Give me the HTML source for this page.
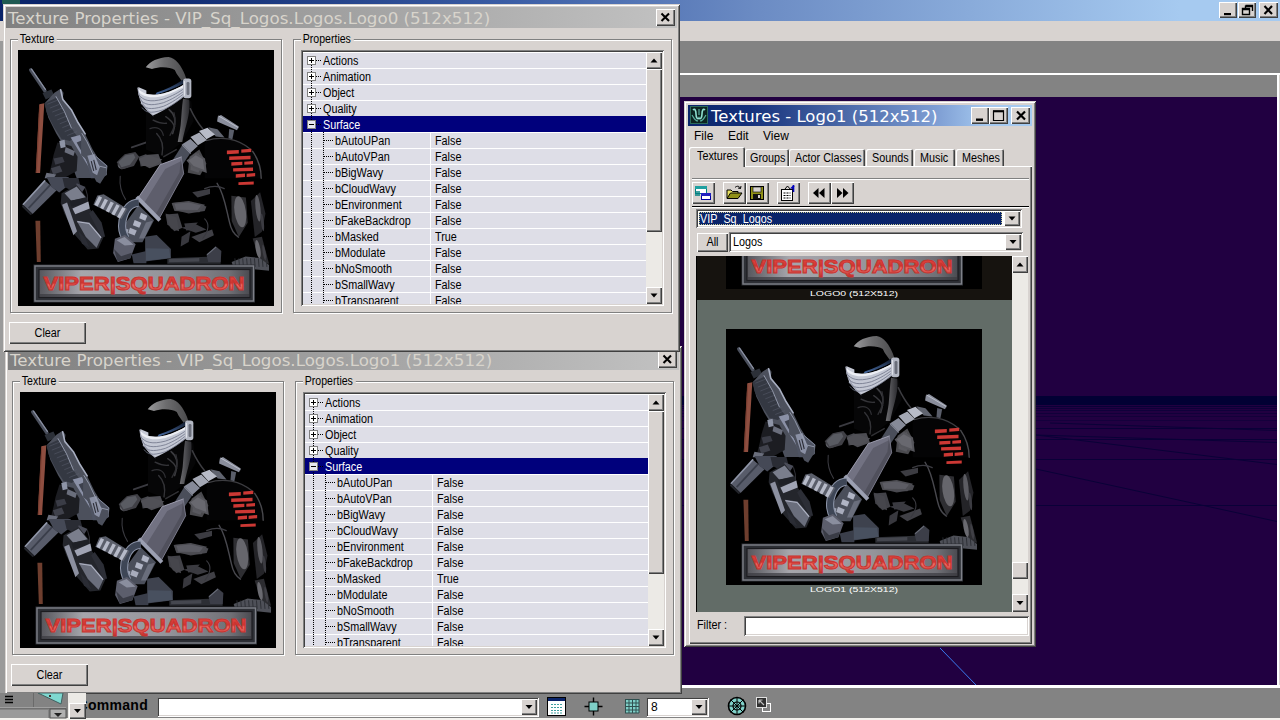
<!DOCTYPE html>
<html lang="en"><head><meta charset="utf-8"><title>Texture Properties</title>
<style>
*{box-sizing:border-box;margin:0;padding:0}
html,body{width:1280px;height:720px;overflow:hidden;background:#808080}
body{position:relative;font-family:"Liberation Sans",sans-serif;font-size:11px;color:#000;line-height:1}
.a{position:absolute}
.face{background:#d8d3d0}
.win{position:absolute;background:#d8d3d0;box-shadow:inset 1px 1px 0 #d8d3d0,inset -1px -1px 0 #404040,inset 2px 2px 0 #fff,inset -2px -2px 0 #808080}
.btn{position:absolute;background:#d8d3d0;box-shadow:inset 1px 1px 0 #fff,inset -1px -1px 0 #404040,inset -2px -2px 0 #808080}
.sunk{position:absolute;box-shadow:inset 1px 1px 0 #808080,inset -1px -1px 0 #fff,inset 2px 2px 0 #404040,inset -2px -2px 0 #d8d3d0}
.grp{position:absolute;border:1px solid #808080;box-shadow:1px 1px 0 #fff,inset 1px 1px 0 #fff}
.grp>span{position:absolute;top:-8px;left:7px;background:#d8d3d0;padding:0 3px 0 2px;font-size:12px;line-height:14px;white-space:nowrap;transform:scaleX(0.88);transform-origin:0 0}
.ttl{position:absolute;font-family:"DejaVu Sans","Liberation Sans",sans-serif;white-space:nowrap}
.t{position:absolute;white-space:nowrap}
.row{position:absolute;left:0;width:343px;height:16px;border-top:1px solid #fff}
.row span{position:absolute;top:0px;line-height:16px;white-space:nowrap;font-size:12px;transform:scaleX(0.9);transform-origin:0 0}
.u{font-size:12px;transform:scaleX(0.9);transform-origin:0 0}
.uc{font-size:12px;transform:scaleX(0.9);transform-origin:50% 0}
.trk{position:absolute;background:#eceae6}
svg{position:absolute;overflow:hidden}
</style></head><body>
<div class="a" style="left:0;top:0;width:1280px;height:21px;background:linear-gradient(90deg,#0a246a 0,#0a246a 120px,#3a5ca4 500px,#6c8cc4 760px,#a6caf0 1180px,#a6caf0 1280px)"></div>
<div class="btn" style="left:1219px;top:2px;width:18px;height:16px"></div>
<div class="btn" style="left:1238px;top:2px;width:18px;height:16px"></div>
<div class="btn" style="left:1259px;top:2px;width:19px;height:16px"></div>
<svg style="left:1219px;top:2px" width="60" height="16"><rect x="5" y="11" width="7" height="2.2" fill="#000"/><path d="M26.5 3.5 H33.5 V9 M26.5 3.5 V6.5 M26.5 4.5 H33.5" stroke="#000" stroke-width="1.4" fill="none"/><path d="M23.5 6.5 H30.5 V12.5 H23.5 Z M23.5 7.5 H30.5" stroke="#000" stroke-width="1.4" fill="none"/><path d="M45.5 4 L53 12 M53 4 L45.5 12" stroke="#000" stroke-width="2.1" fill="none"/></svg>
<div class="a" style="left:2px;top:0;width:18px;height:4px;background:#1f5a52"></div>
<div class="a face" style="left:0;top:21px;width:1280px;height:20px"></div>
<div class="a" style="left:0;top:41px;width:1280px;height:32px;background:#838383"></div>
<div class="a" style="left:0;top:73px;width:1280px;height:2px;background:#fff"></div>
<div class="a" style="left:0;top:75px;width:1277px;height:22px;background:#838383"></div>
<svg style="left:0;top:97px" width="1277" height="588" viewBox="0 0 1277 588"><rect x="0" y="0" width="1277" height="588" fill="#210041"/><rect x="0" y="299" width="1277" height="9" fill="#020034"/><rect x="0" y="309" width="1277" height="1" fill="#020034" opacity="0.75"/><rect x="0" y="311" width="1277" height="1" fill="#020034" opacity="0.6"/><rect x="0" y="313" width="1277" height="1" fill="#020034" opacity="0.55"/><rect x="0" y="316" width="1277" height="1" fill="#020034" opacity="0.5"/><rect x="0" y="319" width="1277" height="1" fill="#020034" opacity="0.45"/><rect x="0" y="323" width="1277" height="1" fill="#020034" opacity="0.4"/><path d="M0 331.5 H1277" stroke="#0a0038" stroke-width="1"/><path d="M0 342.5 H1277" stroke="#0a0038" stroke-width="1"/><path d="M0 362.5 H1277" stroke="#0a0038" stroke-width="1"/><path d="M0 408.5 H1277" stroke="#0a0038" stroke-width="1"/><path d="M1036 338 L1277 345.5" stroke="#0a0038" stroke-width="1"/><path d="M1036 372 L1277 424.5" stroke="#0a0038" stroke-width="1"/><path d="M1050 326 L1277 333.5" stroke="#0a0038" stroke-width="1"/><path d="M1036 338 L1277 367.5" stroke="#0a0038" stroke-width="1"/><path d="M940 551 L976 588" stroke="#3a7af0" stroke-width="1"/></svg>
<div class="a" style="left:1277px;top:75px;width:3px;height:612px;background:#fff"></div>
<div class="a" style="left:1279px;top:75px;width:1px;height:612px;background:#d8d3d0"></div>
<div class="a" style="left:0;top:685px;width:1280px;height:3px;background:#fff"></div>
<div class="a" style="left:0;top:688px;width:1280px;height:30px;background:#838383"></div>
<div class="a" style="left:0;top:718px;width:1280px;height:2px;background:#f4f2ee"></div>
<div class="a" style="left:0;top:21px;width:3px;height:20px;background:#d8d3d0"></div>
<div class="a" style="left:0;top:41px;width:5px;height:652px;background:#9a9a9a"></div>
<div class="win" style="left:684px;top:101px;width:352px;height:546px"></div>
<div class="a" style="left:688px;top:105px;width:344px;height:21px;background:linear-gradient(90deg,#0a246a 0,#14307a 60px,#7f9fd4 250px,#a6caf0 300px,#a6caf0 344px)"></div>
<svg style="left:690px;top:106px" width="18" height="18" viewBox="0 0 18 18"><rect width="18" height="18" fill="#0c2420"/><rect x="0.5" y="0.5" width="17" height="17" fill="none" stroke="#2a6a5a"/><path d="M3 4 C5 2 6 5 6 8 C6 12 8 14 9 12 C10 14 12 12 12 8 C12 5 13 2 15 4" stroke="#8fe0d0" stroke-width="1.6" fill="none"/><path d="M2 9 C4 12 5 15 8 15 M16 9 C14 12 13 15 10 15 M9 3 V9" stroke="#5ab0a0" stroke-width="1.2" fill="none"/></svg>
<div class="ttl" style="left:711px;top:106px;font-size:16.5px;line-height:21px;color:#fff">Textures - Logo1 (512x512)</div>
<div class="btn" style="left:971px;top:107px;width:18px;height:17px"></div>
<div class="btn" style="left:989px;top:107px;width:19px;height:17px"></div>
<div class="btn" style="left:1011px;top:107px;width:19px;height:17px"></div>
<svg style="left:971px;top:107px" width="60" height="17"><rect x="5" y="11.5" width="7" height="2.4" fill="#000"/><path d="M22.5 4 H32.5 V13.5 H22.5 Z" stroke="#000" stroke-width="1.2" fill="none"/><path d="M22 4.3 H33" stroke="#000" stroke-width="2"/><path d="M46 4.5 L54 12.5 M54 4.5 L46 12.5" stroke="#000" stroke-width="2.2" fill="none"/></svg>
<div class="t" style="left:694px;top:128px;font-size:12px;line-height:16px;letter-spacing:0px">File</div>
<div class="t" style="left:728px;top:128px;font-size:12px;line-height:16px;letter-spacing:0px">Edit</div>
<div class="t" style="left:763px;top:128px;font-size:12px;line-height:16px;letter-spacing:0px">View</div>
<div class="a" style="left:689px;top:166px;width:343px;height:478px;box-shadow:inset 1px 1px 0 #fff,inset -1px -1px 0 #404040,inset -2px -2px 0 #808080"></div>
<div class="a" style="left:745px;top:149px;width:44px;height:17px;background:#d8d3d0;border-radius:2px 2px 0 0;box-shadow:inset 1px 1px 0 #fff,inset -1px 0 0 #404040,inset -2px 0 0 #808080"></div>
<div class="t u" style="left:750px;top:151px;line-height:14px">Groups</div>
<div class="a" style="left:789px;top:149px;width:76px;height:17px;background:#d8d3d0;border-radius:2px 2px 0 0;box-shadow:inset 1px 1px 0 #fff,inset -1px 0 0 #404040,inset -2px 0 0 #808080"></div>
<div class="t u" style="left:795px;top:151px;line-height:14px">Actor Classes</div>
<div class="a" style="left:866px;top:149px;width:47px;height:17px;background:#d8d3d0;border-radius:2px 2px 0 0;box-shadow:inset 1px 1px 0 #fff,inset -1px 0 0 #404040,inset -2px 0 0 #808080"></div>
<div class="t u" style="left:872px;top:151px;line-height:14px">Sounds</div>
<div class="a" style="left:914px;top:149px;width:41px;height:17px;background:#d8d3d0;border-radius:2px 2px 0 0;box-shadow:inset 1px 1px 0 #fff,inset -1px 0 0 #404040,inset -2px 0 0 #808080"></div>
<div class="t u" style="left:920px;top:151px;line-height:14px">Music</div>
<div class="a" style="left:956px;top:149px;width:48px;height:17px;background:#d8d3d0;border-radius:2px 2px 0 0;box-shadow:inset 1px 1px 0 #fff,inset -1px 0 0 #404040,inset -2px 0 0 #808080"></div>
<div class="t u" style="left:962px;top:151px;line-height:14px">Meshes</div>
<div class="a" style="left:689px;top:147px;width:56px;height:20px;background:#d8d3d0;border-radius:2px 2px 0 0;box-shadow:inset 1px 1px 0 #fff,inset -1px 0 0 #404040,inset -2px 0 0 #808080"></div>
<div class="t u" style="left:697px;top:149px;line-height:14px">Textures</div>
<div class="a" style="left:692px;top:178px;width:337px;height:1px;background:#808080"></div><div class="a" style="left:692px;top:179px;width:337px;height:1px;background:#fff"></div>
<div class="a" style="left:692px;top:206px;width:337px;height:1px;background:#000"></div><div class="a" style="left:692px;top:207px;width:337px;height:1px;background:#fff"></div>
<div class="btn" style="left:692px;top:182px;width:23px;height:22px"></div>
<div class="btn" style="left:723px;top:182px;width:23px;height:22px"></div>
<div class="btn" style="left:746px;top:182px;width:23px;height:22px"></div>
<div class="btn" style="left:777px;top:182px;width:23px;height:22px"></div>
<div class="btn" style="left:808px;top:182px;width:23px;height:22px"></div>
<div class="btn" style="left:831px;top:182px;width:23px;height:22px"></div>
<svg style="left:0;top:0" width="1280" height="720"><g transform="translate(692,182)"><rect x="3.5" y="4.5" width="11" height="7" fill="#fff" stroke="#008080"/><rect x="3" y="4" width="12" height="3" fill="#20a0a0"/><rect x="9.5" y="11.5" width="9" height="6" fill="#fff" stroke="#0000a0"/><rect x="9" y="11" width="10" height="3" fill="#2020c0"/><path d="M3 10 H8 M3 13 H8" stroke="#008080" stroke-width="1.6"/></g><g transform="translate(723,182)"><path d="M4 16 V8 H8 L9.5 9.5 H15 V11" fill="#e8e060" stroke="#000" stroke-width="1"/><path d="M4 16.5 L7.5 11 H19 L15 16.5 Z" fill="#909018" stroke="#000" stroke-width="1"/><path d="M12 5.5 C14 3.5 16.5 4 17.5 6.5 M17.5 6.5 L15 6 M17.5 6.5 L18 4" stroke="#000" stroke-width="1" fill="none"/></g><g transform="translate(746,182)"><rect x="4.5" y="4.5" width="13" height="13" fill="#909018" stroke="#000"/><rect x="7" y="5" width="8" height="5" fill="#d8d3d0" stroke="#000" stroke-width="0.6"/><rect x="7" y="12" width="8" height="5" fill="#101010"/><rect x="12" y="13" width="2" height="3" fill="#d8d3d0"/></g><g transform="translate(777,182)"><rect x="4.5" y="7.5" width="11" height="11" fill="#fff" stroke="#000"/><path d="M6.5 11 H13.5 M6.5 13.5 H13.5 M6.5 16 H13.5" stroke="#000" stroke-width="1.1" stroke-dasharray="2 1"/><path d="M8 7 L10.5 4 L14 8 L17 4.5" stroke="#000" stroke-width="1" fill="none"/><path d="M16.5 3 V10" stroke="#0000c0" stroke-width="1.6"/><path d="M16 3.5 L13 6.5 L16 6.5Z" fill="#0000c0"/></g><g transform="translate(808,182)"><polygon points="10.5,6 10.5,16 5,11"/><polygon points="16.5,6 16.5,16 11,11"/></g><g transform="translate(831,182)"><polygon points="6,6 6,16 11.5,11"/><polygon points="12,6 12,16 17.5,11"/></g></svg>
<div class="sunk" style="left:696px;top:209px;width:326px;height:19px;background:#fff"></div>
<div class="a" style="left:699px;top:212px;width:303px;height:13px;background:#0a246a;outline:1px dotted #c8c890;outline-offset:-1px"></div>
<div class="t u" style="left:700px;top:212px;line-height:15px;color:#fff">VIP_Sq_Logos</div>
<div class="btn" style="left:1004px;top:211px;width:16px;height:15px"></div>
<svg style="left:1004px;top:211px" width="16" height="15"><polygon points="4.5,5.5 11.5,5.5 8,9.5"/></svg>
<div class="btn" style="left:697px;top:233px;width:31px;height:19px"></div>
<div class="t uc" style="left:697px;top:233px;width:31px;text-align:center;line-height:18px">All</div>
<div class="sunk" style="left:729px;top:232px;width:294px;height:20px;background:#fff"></div>
<div class="t u" style="left:733px;top:234px;line-height:16px">Logos</div>
<div class="btn" style="left:1005px;top:234px;width:16px;height:16px"></div>
<svg style="left:1005px;top:234px" width="16" height="16"><polygon points="4.5,6.0 11.5,6.0 8,10.0"/></svg>
<svg style="left:696px;top:256px" width="316" height="356" viewBox="0 0 316 356"><rect x="0" y="0" width="316" height="356" fill="#626c67"/><rect x="0" y="0" width="316" height="44" fill="#16130f"/><svg x="30" y="-223" width="256" height="256" viewBox="0 0 256 256"><rect width="256" height="256" fill="#000"/><g transform="translate(128,0) scale(0.177778)"></g><g transform="translate(0,0) scale(0.177778)"><polygon points="120,305 148,300 124,692 100,692" fill="#8e4e40"/><path d="M122,310 L103,690" fill="none" stroke="#7a3e30" stroke-width="6" stroke-linecap="butt" stroke-linejoin="round"/><path d="M72,112 L152,230" fill="none" stroke="#4a4f5c" stroke-width="20" stroke-linecap="round" stroke-linejoin="round"/><path d="M76,108 L154,222" fill="none" stroke="#8a90a2" stroke-width="7" stroke-linecap="round" stroke-linejoin="round"/><polygon points="138,242 188,222 204,256 156,278" fill="#2c3038"/><polygon points="150,300 205,240 240,218 256,240 252,272 300,332 332,400 376,470 420,560 470,640 500,655 495,700 470,720 330,720 270,560 215,470 170,380" fill="#4c505c"/><polygon points="150,300 215,268 262,350 300,440 330,482 292,512 245,500 200,430 160,350" fill="#343842"/><path d="M165,305 L220,283" fill="none" stroke="#5a5f6e" stroke-width="4" stroke-linecap="butt" stroke-linejoin="round" opacity="0.7"/><path d="M179,327 L234,305" fill="none" stroke="#5a5f6e" stroke-width="4" stroke-linecap="butt" stroke-linejoin="round" opacity="0.7"/><path d="M193,349 L248,327" fill="none" stroke="#5a5f6e" stroke-width="4" stroke-linecap="butt" stroke-linejoin="round" opacity="0.7"/><path d="M207,371 L262,349" fill="none" stroke="#5a5f6e" stroke-width="4" stroke-linecap="butt" stroke-linejoin="round" opacity="0.7"/><path d="M221,393 L276,371" fill="none" stroke="#5a5f6e" stroke-width="4" stroke-linecap="butt" stroke-linejoin="round" opacity="0.7"/><path d="M235,415 L290,393" fill="none" stroke="#5a5f6e" stroke-width="4" stroke-linecap="butt" stroke-linejoin="round" opacity="0.7"/><path d="M249,437 L304,415" fill="none" stroke="#5a5f6e" stroke-width="4" stroke-linecap="butt" stroke-linejoin="round" opacity="0.7"/><path d="M263,459 L318,437" fill="none" stroke="#5a5f6e" stroke-width="4" stroke-linecap="butt" stroke-linejoin="round" opacity="0.7"/><path d="M277,481 L332,459" fill="none" stroke="#5a5f6e" stroke-width="4" stroke-linecap="butt" stroke-linejoin="round" opacity="0.7"/><path d="M240,224 L252,278 L300,336 L334,402 L378,472" fill="none" stroke="#a8aec0" stroke-width="9" stroke-linecap="round" stroke-linejoin="round"/><path d="M214,262 L262,348 L300,438" fill="none" stroke="#9aa0b2" stroke-width="5" stroke-linecap="round" stroke-linejoin="round"/><polygon points="296,492 348,478 432,640 400,662" fill="#8a90a6"/><polygon points="330,520 360,508 420,625 395,640" fill="#3c404c"/><polygon points="385,615 440,598 502,650 497,706 462,722 410,722" fill="#4e5362"/><path d="M415,640 L440,700 M435,630 L460,692" fill="none" stroke="#22242a" stroke-width="7" stroke-linecap="butt" stroke-linejoin="round"/><path d="M440,600 L500,652 L496,700" fill="none" stroke="#8a90a2" stroke-width="5" stroke-linecap="round" stroke-linejoin="round"/><polygon points="222,520 300,540 335,600 330,680 260,720 170,720 190,640 200,590" fill="#1c1d22"/><polygon points="232,512 262,505 268,545 240,552" fill="#8e94a6"/><polygon points="268,545 320,570 312,596 262,575" fill="#6a6e7c"/><polygon points="200,610 250,600 262,630 210,645" fill="#3a3c46"/><polygon points="185,665 235,650 250,684 198,700" fill="#40424c"/><polygon points="160,690 215,700 200,722 150,722" fill="#6a6e7c"/><polygon points="676,208 722,228 722,332 692,300" fill="#c6cad6"/><ellipse cx="612" cy="625" rx="58" ry="34" fill="#505258" transform="rotate(-35 612 625)"/><ellipse cx="600" cy="640" rx="40" ry="22" fill="#7a7c84" transform="rotate(-35 600 640)" opacity="0.6"/><polygon points="680,600 722,585 722,650 690,655" fill="#45464c"/><path d="M640,548 L722,520" fill="none" stroke="#3a3a40" stroke-width="10" stroke-linecap="round" stroke-linejoin="round"/></g><g transform="translate(128,0) scale(0.177778)"><polygon points="40,365 215,265 255,290 268,400 200,520 100,600 0,560 0,330" fill="#060607"/><path d="M130,335 C160,360 175,390 150,470" fill="none" stroke="#3c3c40" stroke-width="9" stroke-linecap="round" stroke-linejoin="round"/><path d="M40,395 C70,410 90,415 115,412" fill="none" stroke="#343438" stroke-width="8" stroke-linecap="round" stroke-linejoin="round"/><path d="M60,470 C90,500 100,540 90,590" fill="none" stroke="#333337" stroke-width="8" stroke-linecap="round" stroke-linejoin="round"/><path d="M330,520 C420,480 540,500 600,570 C640,620 650,680 650,722 L330,722 Z" fill="#040405"/><path d="M340,510 C420,482 520,498 590,560" fill="none" stroke="#3c3c40" stroke-width="7" stroke-linecap="round" stroke-linejoin="round"/><path d="M600,570 C635,620 648,680 648,722" fill="none" stroke="#48484c" stroke-width="8" stroke-linecap="round" stroke-linejoin="round"/><polygon points="350,434 402,446 442,492 392,486" fill="#60646f"/><polygon points="298,456 346,438 388,476 340,502" fill="#b8bcc8"/><polygon points="250,490 300,464 342,506 292,536" fill="#a4a8b4"/><polygon points="204,530 250,500 292,540 250,578" fill="#868a98"/><polygon points="204,534 250,580 196,660 150,620" fill="#4a4e5a"/><path d="M204,534 L250,580" fill="none" stroke="#8a8e9c" stroke-width="6" stroke-linecap="round" stroke-linejoin="round"/><polygon points="404,374 422,366 522,430 512,452 400,402" fill="#8a8e9c"/><path d="M410,372 L518,436" fill="none" stroke="#c0c4d0" stroke-width="5" stroke-linecap="round" stroke-linejoin="round"/><polygon points="468,444 496,452 486,502 464,496" fill="#5a5e6a"/><polygon points="455,566 522,562 522,582 455,586" fill="#cc3834"/><polygon points="536,560 592,556 592,574 536,578" fill="#cc3834"/><polygon points="468,599 588,595 588,615 468,619" fill="#cc3834"/><polygon points="480,632 542,628 542,647 480,651" fill="#cc3834"/><polygon points="553,628 602,624 602,642 553,646" fill="#cc3834"/><polygon points="490,665 602,661 602,680 490,684" fill="#cc3834"/><polygon points="505,699 557,695 557,714 505,718" fill="#cc3834"/><polygon points="566,696 614,692 614,710 566,714" fill="#cc3834"/><polygon points="245,600 300,560 340,640 305,705 235,690" fill="#4a4a4e"/><polygon points="255,610 295,580 320,640 295,690 250,675" fill="#606066" opacity="0.7"/><polygon points="-10,590 70,585 90,640 20,665 -10,650" fill="#4c4c52"/><path d="M100,600 L170,560" fill="none" stroke="#303034" stroke-width="8" stroke-linecap="round" stroke-linejoin="round"/></g><g transform="translate(112,0) scale(0.133333)"><defs><linearGradient id="hlG1" x1="0" x2="1" y1="0" y2="0"><stop offset="0" stop-color="#9a9a9c"/><stop offset="0.45" stop-color="#6c6c6e"/><stop offset="1" stop-color="#4a4a4c"/></linearGradient><linearGradient id="nkG1" x1="0" x2="1" y1="0" y2="0"><stop offset="0" stop-color="#6e6e72"/><stop offset="1" stop-color="#2a2a2e"/></linearGradient><linearGradient id="glG1" x1="0" x2="0" y1="0" y2="1"><stop offset="0" stop-color="#101828"/><stop offset="1" stop-color="#4a6ea6"/></linearGradient></defs><path d="M118,130 C150,85 210,55 290,52 C345,60 385,120 412,185 L424,222 L396,244 C380,215 352,190 336,150 C300,128 230,122 165,142 Z" fill="url(#hlG1)"/><path d="M190,335 C260,318 340,285 404,250 L398,222 C340,262 270,300 200,318 Z" fill="url(#glG1)"/><path d="M398,366 L444,374 C452,430 440,500 422,562 C410,610 398,650 392,690 L358,690 C366,640 376,600 380,562 C386,500 388,430 398,366 Z" fill="url(#nkG1)"/><path d="M452,440 C480,500 510,550 545,590" fill="none" stroke="#3c3c40" stroke-width="11" stroke-linecap="round" stroke-linejoin="round"/><path d="M268,500 C300,520 320,540 335,575" fill="none" stroke="#38383c" stroke-width="10" stroke-linecap="round" stroke-linejoin="round"/><path d="M330,470 C345,520 340,580 300,640" fill="none" stroke="#2e2e32" stroke-width="10" stroke-linecap="round" stroke-linejoin="round"/><path d="M150,590 C200,570 240,590 250,640" fill="none" stroke="#303034" stroke-width="9" stroke-linecap="round" stroke-linejoin="round"/><path d="M58,284 C90,330 150,350 250,326 C320,305 370,280 408,256 L404,348 C350,395 260,450 172,492 C120,460 80,400 62,330 Z" fill="#c4c8d4"/><path d="M58,284 C90,330 150,350 250,326 C320,305 370,280 408,256 L407,276 C360,300 320,322 250,345 C150,368 95,350 62,312 Z" fill="#eceef4"/><path d="M66,336.1 C100,379.2 150,394.3 250,368.4 C320,344.6 370,314.8 406,288.9" fill="none" stroke="#6e7388" stroke-width="6"/><path d="M74,368.4 C106,409.8 150,423.2 250,395.6 C320,368.4 370,335.2 406,307.6" fill="none" stroke="#6e7388" stroke-width="6"/><path d="M82,400.7 C112,440.4 150,452.1 250,422.8 C320,392.2 370,355.6 406,326.3" fill="none" stroke="#6e7388" stroke-width="6"/><path d="M90,431.1 C118,469.2 150,479.3 250,448.4 C320,414.6 370,374.8 406,343.9" fill="none" stroke="#6e7388" stroke-width="6"/><path d="M58,284 C64,340 90,420 172,492" fill="none" stroke="#8a8ea0" stroke-width="6" stroke-linecap="round" stroke-linejoin="round"/><rect x="398" y="214" width="62" height="148" rx="20" fill="#b4b8c4"/><rect x="424" y="240" width="22" height="98" rx="9" fill="#6a6e7a"/><path d="M408,236 L408,340" fill="none" stroke="#e6e8f0" stroke-width="7" stroke-linecap="round" stroke-linejoin="round"/></g><g transform="translate(64,64) scale(0.177778)"><polygon points="195,272 240,226 300,214 322,240 292,292 222,312" fill="#404046"/><polygon points="205,270 245,232 290,225 300,245 270,285 222,300" fill="#62646c" opacity="0.75"/><polygon points="318,252 372,230 452,256 402,292 340,292" fill="#505056"/><polygon points="588,262 640,218 692,250 702,332 622,302" fill="#56565c"/><polygon points="600,262 640,232 680,255 688,315 628,292" fill="#74747c" opacity="0.6"/><polygon points="505,500 600,492 700,520 690,545 600,560 520,540" fill="#48484e"/><polygon points="470,565 540,560 565,640 520,660 480,620" fill="#424248"/><polygon points="560,640 640,620 700,650 640,668" fill="#3a3a40"/><polygon points="620,440 720,420 720,450 650,470" fill="#3c3c42"/><path d="M215,350 C210,400 225,450 245,480" fill="none" stroke="#3a3a40" stroke-width="6" stroke-linecap="round" stroke-linejoin="round"/><path d="M20,420 C40,470 30,520 10,560" fill="none" stroke="#303036" stroke-width="6" stroke-linecap="round" stroke-linejoin="round"/><polygon points="-5,95 30,150 95,290 136,300 140,332 102,392 80,380 20,250 -5,232" fill="#4c505c"/><polygon points="30,235 70,225 100,300 85,345 60,330" fill="#8a90a4"/><path d="M52,265 L66,320 M66,258 L80,315" fill="none" stroke="#2a2c34" stroke-width="6" stroke-linecap="butt" stroke-linejoin="round"/><path d="M0,110 L28,156 L92,292 L134,302" fill="none" stroke="#9aa0b2" stroke-width="5" stroke-linecap="round" stroke-linejoin="round"/><polygon points="558,242 440,285 312,478 430,596 572,336" fill="#5e5e6c"/><polygon points="558,242 440,285 312,478 345,508 468,310 556,266" fill="#727282"/><polygon points="558,242 572,336 430,596 408,575 548,330" fill="#50505c"/><path d="M558,242 L440,285 L312,478" fill="none" stroke="#a4a4b6" stroke-width="5" stroke-linecap="round" stroke-linejoin="round"/><path d="M558,242 L572,336 L430,596" fill="none" stroke="#8a8a9c" stroke-width="4" stroke-linecap="round" stroke-linejoin="round"/><polygon points="300,474 316,458 446,590 430,606" fill="#9ca0b2"/><polygon points="318,512 405,598 340,722 215,722 240,620" fill="#4a4e5a"/><polygon points="332,556 368,572 356,600 322,586" fill="#b0b4c4"/><polygon points="296,596 334,612 322,640 286,626" fill="#b0b4c4"/><polygon points="270,640 308,656 296,684 260,670" fill="#a8acbc"/><polygon points="228,640 262,650 250,690 220,690" fill="#9ea2b2"/><polygon points="360,610 398,600 350,700 320,700" fill="#6a6e7c"/><path d="M318,500 C268,500 240,545 228,600 C220,645 228,672 246,700" fill="none" stroke="#8a92a6" stroke-width="46" stroke-linecap="butt" stroke-linejoin="round"/><path d="M318,500 C268,500 240,545 228,600 C220,645 228,672 246,700" fill="none" stroke="#3e4656" stroke-width="34" stroke-linecap="butt" stroke-linejoin="round"/></g><g transform="translate(32,80) scale(0.177778)"><polygon points="266,368 302,362 436,444 402,502 350,472 244,420" fill="#5a5e6a"/><polygon points="275,371 293,380 268,431 250,421" fill="#b6bac8"/><polygon points="308,387 326,395 299,447 282,438" fill="#b6bac8"/><polygon points="341,402 359,411 331,464 314,455" fill="#b6bac8"/><polygon points="374,418 392,426 362,481 345,472" fill="#b6bac8"/><polygon points="407,434 426,442 394,498 377,489" fill="#b6bac8"/></g><g transform="translate(0,128) scale(0.177778)"><polygon points="98,240 125,240 128,472 106,472" fill="#6e3e2e"/><polygon points="28,150 150,14 216,70 82,202" fill="#585c6a"/><path d="M30,148 L150,16" fill="none" stroke="#9096a8" stroke-width="9" stroke-linecap="round" stroke-linejoin="round"/><path d="M60,170 L180,40" fill="none" stroke="#3a3e4a" stroke-width="10" stroke-linecap="butt" stroke-linejoin="round"/><polygon points="28,150 82,202 70,208 22,162" fill="#22242a"/><polygon points="160,-5 285,-5 282,42 232,82 190,52" fill="#454956"/><polygon points="250,0 340,0 350,40 300,70 262,50" fill="#2a2c34"/><polygon points="330,30 380,50 360,80 322,66" fill="#4a4c58"/><polygon points="245,86 330,40 386,110 402,172 470,262 482,330 452,396 392,402 322,322 262,202 240,142" fill="#24262c"/><polygon points="248,150 276,138 332,300 312,322" fill="#8c90a0"/><polygon points="262,86 330,48 380,108 300,128" fill="#7a7e8c"/><polygon points="290,128 384,112 390,140 300,160" fill="#1e2026"/><polygon points="306,172 396,132 404,172 322,204" fill="#a0a4b4"/><polygon points="330,240 402,250 470,332 442,392 382,332" fill="#6a6e7c"/><path d="M336,246 L400,256 L466,334" fill="none" stroke="#b0b4c4" stroke-width="6" stroke-linecap="round" stroke-linejoin="round"/><polygon points="340,300 380,340 400,390 360,370" fill="#2a2c34"/><polygon points="420,180 470,250 490,330 470,330 400,200" fill="#2c2e36"/><polygon points="545,342 602,320 662,372 632,452 562,472 535,422" fill="#5c5e6c"/><polygon points="555,350 600,332 650,375 600,380" fill="#8a8e9e"/><polygon points="540,400 560,470 632,452 640,420 580,440" fill="#3a3c46"/><polygon points="640,430 722,410 722,480 650,480" fill="#3a3e4a"/></g><g transform="translate(128,128) scale(0.177778)"><polygon points="145,140 240,130 332,150 300,192 160,186" fill="#4c4c52"/><polygon points="160,145 240,138 310,155 290,180 170,178" fill="#6a6a72" opacity="0.55"/><polygon points="110,200 172,222 186,300 140,282" fill="#46464c"/><polygon points="215,256 292,250 252,292 226,296" fill="#3a3a40"/><polygon points="255,332 372,290 382,322 300,362" fill="#404046"/><polygon points="200,330 250,300 240,360 195,385" fill="#38383e"/><path d="M400,30 C440,90 450,170 470,250 C480,300 500,320 520,332" fill="none" stroke="#48484e" stroke-width="8" stroke-linecap="round" stroke-linejoin="round"/><path d="M330,60 C380,40 420,50 440,60" fill="none" stroke="#3c3c42" stroke-width="7" stroke-linecap="round" stroke-linejoin="round"/><path d="M330,230 C360,260 350,300 320,340" fill="none" stroke="#3a3a40" stroke-width="6" stroke-linecap="round" stroke-linejoin="round"/><polygon points="480,100 562,110 572,252 522,332 482,242" fill="#2e2e32"/><ellipse cx="530" cy="190" rx="32" ry="88" fill="#66666c" transform="rotate(-8 530 190)"/><polygon points="590,130 642,80 672,200 652,302 612,332" fill="#242428"/><ellipse cx="630" cy="170" rx="14" ry="75" fill="#5c5c62" transform="rotate(-6 630 170)"/><ellipse cx="655" cy="250" rx="8" ry="50" fill="#3c3c42" transform="rotate(-6 655 250)"/><polygon points="600,340 652,330 692,482 642,472" fill="#2c2c30"/><ellipse cx="630" cy="400" rx="13" ry="52" fill="#6a6a70" transform="rotate(-10 630 400)"/><ellipse cx="665" cy="420" rx="8" ry="45" fill="#404046" transform="rotate(-10 665 420)"/><polygon points="482,472 560,442 640,450 692,490 692,522 490,502" fill="#4e5058"/><path d="M500,452 L504,500" fill="none" stroke="#2a2c32" stroke-width="5" stroke-linecap="butt" stroke-linejoin="round"/><path d="M522,452 L526,500" fill="none" stroke="#2a2c32" stroke-width="5" stroke-linecap="butt" stroke-linejoin="round"/><path d="M544,452 L548,500" fill="none" stroke="#2a2c32" stroke-width="5" stroke-linecap="butt" stroke-linejoin="round"/><path d="M566,452 L570,500" fill="none" stroke="#2a2c32" stroke-width="5" stroke-linecap="butt" stroke-linejoin="round"/><path d="M588,452 L592,500" fill="none" stroke="#2a2c32" stroke-width="5" stroke-linecap="butt" stroke-linejoin="round"/><path d="M610,452 L614,500" fill="none" stroke="#2a2c32" stroke-width="5" stroke-linecap="butt" stroke-linejoin="round"/><path d="M632,452 L636,500" fill="none" stroke="#2a2c32" stroke-width="5" stroke-linecap="butt" stroke-linejoin="round"/><path d="M654,452 L658,500" fill="none" stroke="#2a2c32" stroke-width="5" stroke-linecap="butt" stroke-linejoin="round"/><path d="M676,452 L680,500" fill="none" stroke="#2a2c32" stroke-width="5" stroke-linecap="butt" stroke-linejoin="round"/><polygon points="520,24 606,20 606,36 520,40" fill="#cc3834"/><polygon points="-5,330 60,320 140,400 140,452 -5,470" fill="#3e424e"/><polygon points="0,395 130,398 138,450 0,465" fill="#48505f"/><polygon points="120,452 420,440 420,482 120,482" fill="#2c2e34"/><polygon points="130,456 300,450 300,470 130,474" fill="#45474f"/><polygon points="340,430 392,384 424,410 420,472 350,472" fill="#3c3e48"/><path d="M346,430 L392,390" fill="none" stroke="#6a6e7a" stroke-width="6" stroke-linecap="round" stroke-linejoin="round"/></g><defs><linearGradient id="bnG1" x1="0" x2="1" y1="0" y2="0"><stop offset="0" stop-color="#56565c"/><stop offset="0.2" stop-color="#a6a6ac"/><stop offset="0.6" stop-color="#94949a"/><stop offset="0.9" stop-color="#707076"/><stop offset="1" stop-color="#4a4a50"/></linearGradient><linearGradient id="bnT1" x1="0" x2="0" y1="0" y2="1"><stop offset="0" stop-color="#e85048"/><stop offset="0.45" stop-color="#d03430"/><stop offset="0.55" stop-color="#f07068"/><stop offset="1" stop-color="#c02c2a"/></linearGradient></defs><rect x="15.5" y="214.5" width="221.5" height="38" fill="#2e3036"/><rect x="17" y="216" width="218.5" height="35" fill="none" stroke="#7e8088" stroke-width="1.4"/><rect x="21" y="219.5" width="211" height="28" fill="url(#bnG1)"/><rect x="21" y="219.5" width="211" height="28" fill="none" stroke="#1c1c20" stroke-width="1.2"/><rect x="22" y="244" width="209" height="3" fill="#3a3a40" opacity="0.7"/><text x="25.5" y="240" font-family="Liberation Sans,sans-serif" font-weight="bold" font-size="17.6" textLength="201" lengthAdjust="spacingAndGlyphs" fill="url(#bnT1)" stroke="#c83430" stroke-width="0.9">VIPER|SQUADRON</text></svg><svg x="30" y="73" width="256" height="256" viewBox="0 0 256 256"><rect width="256" height="256" fill="#000"/><g transform="translate(128,0) scale(0.177778)"></g><g transform="translate(0,0) scale(0.177778)"><polygon points="120,305 148,300 124,692 100,692" fill="#8e4e40"/><path d="M122,310 L103,690" fill="none" stroke="#7a3e30" stroke-width="6" stroke-linecap="butt" stroke-linejoin="round"/><path d="M72,112 L152,230" fill="none" stroke="#4a4f5c" stroke-width="20" stroke-linecap="round" stroke-linejoin="round"/><path d="M76,108 L154,222" fill="none" stroke="#8a90a2" stroke-width="7" stroke-linecap="round" stroke-linejoin="round"/><polygon points="138,242 188,222 204,256 156,278" fill="#2c3038"/><polygon points="150,300 205,240 240,218 256,240 252,272 300,332 332,400 376,470 420,560 470,640 500,655 495,700 470,720 330,720 270,560 215,470 170,380" fill="#4c505c"/><polygon points="150,300 215,268 262,350 300,440 330,482 292,512 245,500 200,430 160,350" fill="#343842"/><path d="M165,305 L220,283" fill="none" stroke="#5a5f6e" stroke-width="4" stroke-linecap="butt" stroke-linejoin="round" opacity="0.7"/><path d="M179,327 L234,305" fill="none" stroke="#5a5f6e" stroke-width="4" stroke-linecap="butt" stroke-linejoin="round" opacity="0.7"/><path d="M193,349 L248,327" fill="none" stroke="#5a5f6e" stroke-width="4" stroke-linecap="butt" stroke-linejoin="round" opacity="0.7"/><path d="M207,371 L262,349" fill="none" stroke="#5a5f6e" stroke-width="4" stroke-linecap="butt" stroke-linejoin="round" opacity="0.7"/><path d="M221,393 L276,371" fill="none" stroke="#5a5f6e" stroke-width="4" stroke-linecap="butt" stroke-linejoin="round" opacity="0.7"/><path d="M235,415 L290,393" fill="none" stroke="#5a5f6e" stroke-width="4" stroke-linecap="butt" stroke-linejoin="round" opacity="0.7"/><path d="M249,437 L304,415" fill="none" stroke="#5a5f6e" stroke-width="4" stroke-linecap="butt" stroke-linejoin="round" opacity="0.7"/><path d="M263,459 L318,437" fill="none" stroke="#5a5f6e" stroke-width="4" stroke-linecap="butt" stroke-linejoin="round" opacity="0.7"/><path d="M277,481 L332,459" fill="none" stroke="#5a5f6e" stroke-width="4" stroke-linecap="butt" stroke-linejoin="round" opacity="0.7"/><path d="M240,224 L252,278 L300,336 L334,402 L378,472" fill="none" stroke="#a8aec0" stroke-width="9" stroke-linecap="round" stroke-linejoin="round"/><path d="M214,262 L262,348 L300,438" fill="none" stroke="#9aa0b2" stroke-width="5" stroke-linecap="round" stroke-linejoin="round"/><polygon points="296,492 348,478 432,640 400,662" fill="#8a90a6"/><polygon points="330,520 360,508 420,625 395,640" fill="#3c404c"/><polygon points="385,615 440,598 502,650 497,706 462,722 410,722" fill="#4e5362"/><path d="M415,640 L440,700 M435,630 L460,692" fill="none" stroke="#22242a" stroke-width="7" stroke-linecap="butt" stroke-linejoin="round"/><path d="M440,600 L500,652 L496,700" fill="none" stroke="#8a90a2" stroke-width="5" stroke-linecap="round" stroke-linejoin="round"/><polygon points="222,520 300,540 335,600 330,680 260,720 170,720 190,640 200,590" fill="#1c1d22"/><polygon points="232,512 262,505 268,545 240,552" fill="#8e94a6"/><polygon points="268,545 320,570 312,596 262,575" fill="#6a6e7c"/><polygon points="200,610 250,600 262,630 210,645" fill="#3a3c46"/><polygon points="185,665 235,650 250,684 198,700" fill="#40424c"/><polygon points="160,690 215,700 200,722 150,722" fill="#6a6e7c"/><polygon points="676,208 722,228 722,332 692,300" fill="#c6cad6"/><ellipse cx="612" cy="625" rx="58" ry="34" fill="#505258" transform="rotate(-35 612 625)"/><ellipse cx="600" cy="640" rx="40" ry="22" fill="#7a7c84" transform="rotate(-35 600 640)" opacity="0.6"/><polygon points="680,600 722,585 722,650 690,655" fill="#45464c"/><path d="M640,548 L722,520" fill="none" stroke="#3a3a40" stroke-width="10" stroke-linecap="round" stroke-linejoin="round"/></g><g transform="translate(128,0) scale(0.177778)"><polygon points="40,365 215,265 255,290 268,400 200,520 100,600 0,560 0,330" fill="#060607"/><path d="M130,335 C160,360 175,390 150,470" fill="none" stroke="#3c3c40" stroke-width="9" stroke-linecap="round" stroke-linejoin="round"/><path d="M40,395 C70,410 90,415 115,412" fill="none" stroke="#343438" stroke-width="8" stroke-linecap="round" stroke-linejoin="round"/><path d="M60,470 C90,500 100,540 90,590" fill="none" stroke="#333337" stroke-width="8" stroke-linecap="round" stroke-linejoin="round"/><path d="M330,520 C420,480 540,500 600,570 C640,620 650,680 650,722 L330,722 Z" fill="#040405"/><path d="M340,510 C420,482 520,498 590,560" fill="none" stroke="#3c3c40" stroke-width="7" stroke-linecap="round" stroke-linejoin="round"/><path d="M600,570 C635,620 648,680 648,722" fill="none" stroke="#48484c" stroke-width="8" stroke-linecap="round" stroke-linejoin="round"/><polygon points="350,434 402,446 442,492 392,486" fill="#60646f"/><polygon points="298,456 346,438 388,476 340,502" fill="#b8bcc8"/><polygon points="250,490 300,464 342,506 292,536" fill="#a4a8b4"/><polygon points="204,530 250,500 292,540 250,578" fill="#868a98"/><polygon points="204,534 250,580 196,660 150,620" fill="#4a4e5a"/><path d="M204,534 L250,580" fill="none" stroke="#8a8e9c" stroke-width="6" stroke-linecap="round" stroke-linejoin="round"/><polygon points="404,374 422,366 522,430 512,452 400,402" fill="#8a8e9c"/><path d="M410,372 L518,436" fill="none" stroke="#c0c4d0" stroke-width="5" stroke-linecap="round" stroke-linejoin="round"/><polygon points="468,444 496,452 486,502 464,496" fill="#5a5e6a"/><polygon points="455,566 522,562 522,582 455,586" fill="#cc3834"/><polygon points="536,560 592,556 592,574 536,578" fill="#cc3834"/><polygon points="468,599 588,595 588,615 468,619" fill="#cc3834"/><polygon points="480,632 542,628 542,647 480,651" fill="#cc3834"/><polygon points="553,628 602,624 602,642 553,646" fill="#cc3834"/><polygon points="490,665 602,661 602,680 490,684" fill="#cc3834"/><polygon points="505,699 557,695 557,714 505,718" fill="#cc3834"/><polygon points="566,696 614,692 614,710 566,714" fill="#cc3834"/><polygon points="245,600 300,560 340,640 305,705 235,690" fill="#4a4a4e"/><polygon points="255,610 295,580 320,640 295,690 250,675" fill="#606066" opacity="0.7"/><polygon points="-10,590 70,585 90,640 20,665 -10,650" fill="#4c4c52"/><path d="M100,600 L170,560" fill="none" stroke="#303034" stroke-width="8" stroke-linecap="round" stroke-linejoin="round"/></g><g transform="translate(112,0) scale(0.133333)"><defs><linearGradient id="hlG2" x1="0" x2="1" y1="0" y2="0"><stop offset="0" stop-color="#9a9a9c"/><stop offset="0.45" stop-color="#6c6c6e"/><stop offset="1" stop-color="#4a4a4c"/></linearGradient><linearGradient id="nkG2" x1="0" x2="1" y1="0" y2="0"><stop offset="0" stop-color="#6e6e72"/><stop offset="1" stop-color="#2a2a2e"/></linearGradient><linearGradient id="glG2" x1="0" x2="0" y1="0" y2="1"><stop offset="0" stop-color="#101828"/><stop offset="1" stop-color="#4a6ea6"/></linearGradient></defs><path d="M118,130 C150,85 210,55 290,52 C345,60 385,120 412,185 L424,222 L396,244 C380,215 352,190 336,150 C300,128 230,122 165,142 Z" fill="url(#hlG2)"/><path d="M190,335 C260,318 340,285 404,250 L398,222 C340,262 270,300 200,318 Z" fill="url(#glG2)"/><path d="M398,366 L444,374 C452,430 440,500 422,562 C410,610 398,650 392,690 L358,690 C366,640 376,600 380,562 C386,500 388,430 398,366 Z" fill="url(#nkG2)"/><path d="M452,440 C480,500 510,550 545,590" fill="none" stroke="#3c3c40" stroke-width="11" stroke-linecap="round" stroke-linejoin="round"/><path d="M268,500 C300,520 320,540 335,575" fill="none" stroke="#38383c" stroke-width="10" stroke-linecap="round" stroke-linejoin="round"/><path d="M330,470 C345,520 340,580 300,640" fill="none" stroke="#2e2e32" stroke-width="10" stroke-linecap="round" stroke-linejoin="round"/><path d="M150,590 C200,570 240,590 250,640" fill="none" stroke="#303034" stroke-width="9" stroke-linecap="round" stroke-linejoin="round"/><path d="M58,284 C90,330 150,350 250,326 C320,305 370,280 408,256 L404,348 C350,395 260,450 172,492 C120,460 80,400 62,330 Z" fill="#c4c8d4"/><path d="M58,284 C90,330 150,350 250,326 C320,305 370,280 408,256 L407,276 C360,300 320,322 250,345 C150,368 95,350 62,312 Z" fill="#eceef4"/><path d="M66,336.1 C100,379.2 150,394.3 250,368.4 C320,344.6 370,314.8 406,288.9" fill="none" stroke="#6e7388" stroke-width="6"/><path d="M74,368.4 C106,409.8 150,423.2 250,395.6 C320,368.4 370,335.2 406,307.6" fill="none" stroke="#6e7388" stroke-width="6"/><path d="M82,400.7 C112,440.4 150,452.1 250,422.8 C320,392.2 370,355.6 406,326.3" fill="none" stroke="#6e7388" stroke-width="6"/><path d="M90,431.1 C118,469.2 150,479.3 250,448.4 C320,414.6 370,374.8 406,343.9" fill="none" stroke="#6e7388" stroke-width="6"/><path d="M58,284 C64,340 90,420 172,492" fill="none" stroke="#8a8ea0" stroke-width="6" stroke-linecap="round" stroke-linejoin="round"/><rect x="398" y="214" width="62" height="148" rx="20" fill="#b4b8c4"/><rect x="424" y="240" width="22" height="98" rx="9" fill="#6a6e7a"/><path d="M408,236 L408,340" fill="none" stroke="#e6e8f0" stroke-width="7" stroke-linecap="round" stroke-linejoin="round"/></g><g transform="translate(64,64) scale(0.177778)"><polygon points="195,272 240,226 300,214 322,240 292,292 222,312" fill="#404046"/><polygon points="205,270 245,232 290,225 300,245 270,285 222,300" fill="#62646c" opacity="0.75"/><polygon points="318,252 372,230 452,256 402,292 340,292" fill="#505056"/><polygon points="588,262 640,218 692,250 702,332 622,302" fill="#56565c"/><polygon points="600,262 640,232 680,255 688,315 628,292" fill="#74747c" opacity="0.6"/><polygon points="505,500 600,492 700,520 690,545 600,560 520,540" fill="#48484e"/><polygon points="470,565 540,560 565,640 520,660 480,620" fill="#424248"/><polygon points="560,640 640,620 700,650 640,668" fill="#3a3a40"/><polygon points="620,440 720,420 720,450 650,470" fill="#3c3c42"/><path d="M215,350 C210,400 225,450 245,480" fill="none" stroke="#3a3a40" stroke-width="6" stroke-linecap="round" stroke-linejoin="round"/><path d="M20,420 C40,470 30,520 10,560" fill="none" stroke="#303036" stroke-width="6" stroke-linecap="round" stroke-linejoin="round"/><polygon points="-5,95 30,150 95,290 136,300 140,332 102,392 80,380 20,250 -5,232" fill="#4c505c"/><polygon points="30,235 70,225 100,300 85,345 60,330" fill="#8a90a4"/><path d="M52,265 L66,320 M66,258 L80,315" fill="none" stroke="#2a2c34" stroke-width="6" stroke-linecap="butt" stroke-linejoin="round"/><path d="M0,110 L28,156 L92,292 L134,302" fill="none" stroke="#9aa0b2" stroke-width="5" stroke-linecap="round" stroke-linejoin="round"/><polygon points="558,242 440,285 312,478 430,596 572,336" fill="#5e5e6c"/><polygon points="558,242 440,285 312,478 345,508 468,310 556,266" fill="#727282"/><polygon points="558,242 572,336 430,596 408,575 548,330" fill="#50505c"/><path d="M558,242 L440,285 L312,478" fill="none" stroke="#a4a4b6" stroke-width="5" stroke-linecap="round" stroke-linejoin="round"/><path d="M558,242 L572,336 L430,596" fill="none" stroke="#8a8a9c" stroke-width="4" stroke-linecap="round" stroke-linejoin="round"/><polygon points="300,474 316,458 446,590 430,606" fill="#9ca0b2"/><polygon points="318,512 405,598 340,722 215,722 240,620" fill="#4a4e5a"/><polygon points="332,556 368,572 356,600 322,586" fill="#b0b4c4"/><polygon points="296,596 334,612 322,640 286,626" fill="#b0b4c4"/><polygon points="270,640 308,656 296,684 260,670" fill="#a8acbc"/><polygon points="228,640 262,650 250,690 220,690" fill="#9ea2b2"/><polygon points="360,610 398,600 350,700 320,700" fill="#6a6e7c"/><path d="M318,500 C268,500 240,545 228,600 C220,645 228,672 246,700" fill="none" stroke="#8a92a6" stroke-width="46" stroke-linecap="butt" stroke-linejoin="round"/><path d="M318,500 C268,500 240,545 228,600 C220,645 228,672 246,700" fill="none" stroke="#3e4656" stroke-width="34" stroke-linecap="butt" stroke-linejoin="round"/></g><g transform="translate(32,80) scale(0.177778)"><polygon points="266,368 302,362 436,444 402,502 350,472 244,420" fill="#5a5e6a"/><polygon points="275,371 293,380 268,431 250,421" fill="#b6bac8"/><polygon points="308,387 326,395 299,447 282,438" fill="#b6bac8"/><polygon points="341,402 359,411 331,464 314,455" fill="#b6bac8"/><polygon points="374,418 392,426 362,481 345,472" fill="#b6bac8"/><polygon points="407,434 426,442 394,498 377,489" fill="#b6bac8"/></g><g transform="translate(0,128) scale(0.177778)"><polygon points="98,240 125,240 128,472 106,472" fill="#6e3e2e"/><polygon points="28,150 150,14 216,70 82,202" fill="#585c6a"/><path d="M30,148 L150,16" fill="none" stroke="#9096a8" stroke-width="9" stroke-linecap="round" stroke-linejoin="round"/><path d="M60,170 L180,40" fill="none" stroke="#3a3e4a" stroke-width="10" stroke-linecap="butt" stroke-linejoin="round"/><polygon points="28,150 82,202 70,208 22,162" fill="#22242a"/><polygon points="160,-5 285,-5 282,42 232,82 190,52" fill="#454956"/><polygon points="250,0 340,0 350,40 300,70 262,50" fill="#2a2c34"/><polygon points="330,30 380,50 360,80 322,66" fill="#4a4c58"/><polygon points="245,86 330,40 386,110 402,172 470,262 482,330 452,396 392,402 322,322 262,202 240,142" fill="#24262c"/><polygon points="248,150 276,138 332,300 312,322" fill="#8c90a0"/><polygon points="262,86 330,48 380,108 300,128" fill="#7a7e8c"/><polygon points="290,128 384,112 390,140 300,160" fill="#1e2026"/><polygon points="306,172 396,132 404,172 322,204" fill="#a0a4b4"/><polygon points="330,240 402,250 470,332 442,392 382,332" fill="#6a6e7c"/><path d="M336,246 L400,256 L466,334" fill="none" stroke="#b0b4c4" stroke-width="6" stroke-linecap="round" stroke-linejoin="round"/><polygon points="340,300 380,340 400,390 360,370" fill="#2a2c34"/><polygon points="420,180 470,250 490,330 470,330 400,200" fill="#2c2e36"/><polygon points="545,342 602,320 662,372 632,452 562,472 535,422" fill="#5c5e6c"/><polygon points="555,350 600,332 650,375 600,380" fill="#8a8e9e"/><polygon points="540,400 560,470 632,452 640,420 580,440" fill="#3a3c46"/><polygon points="640,430 722,410 722,480 650,480" fill="#3a3e4a"/></g><g transform="translate(128,128) scale(0.177778)"><polygon points="145,140 240,130 332,150 300,192 160,186" fill="#4c4c52"/><polygon points="160,145 240,138 310,155 290,180 170,178" fill="#6a6a72" opacity="0.55"/><polygon points="110,200 172,222 186,300 140,282" fill="#46464c"/><polygon points="215,256 292,250 252,292 226,296" fill="#3a3a40"/><polygon points="255,332 372,290 382,322 300,362" fill="#404046"/><polygon points="200,330 250,300 240,360 195,385" fill="#38383e"/><path d="M400,30 C440,90 450,170 470,250 C480,300 500,320 520,332" fill="none" stroke="#48484e" stroke-width="8" stroke-linecap="round" stroke-linejoin="round"/><path d="M330,60 C380,40 420,50 440,60" fill="none" stroke="#3c3c42" stroke-width="7" stroke-linecap="round" stroke-linejoin="round"/><path d="M330,230 C360,260 350,300 320,340" fill="none" stroke="#3a3a40" stroke-width="6" stroke-linecap="round" stroke-linejoin="round"/><polygon points="480,100 562,110 572,252 522,332 482,242" fill="#2e2e32"/><ellipse cx="530" cy="190" rx="32" ry="88" fill="#66666c" transform="rotate(-8 530 190)"/><polygon points="590,130 642,80 672,200 652,302 612,332" fill="#242428"/><ellipse cx="630" cy="170" rx="14" ry="75" fill="#5c5c62" transform="rotate(-6 630 170)"/><ellipse cx="655" cy="250" rx="8" ry="50" fill="#3c3c42" transform="rotate(-6 655 250)"/><polygon points="600,340 652,330 692,482 642,472" fill="#2c2c30"/><ellipse cx="630" cy="400" rx="13" ry="52" fill="#6a6a70" transform="rotate(-10 630 400)"/><ellipse cx="665" cy="420" rx="8" ry="45" fill="#404046" transform="rotate(-10 665 420)"/><polygon points="482,472 560,442 640,450 692,490 692,522 490,502" fill="#4e5058"/><path d="M500,452 L504,500" fill="none" stroke="#2a2c32" stroke-width="5" stroke-linecap="butt" stroke-linejoin="round"/><path d="M522,452 L526,500" fill="none" stroke="#2a2c32" stroke-width="5" stroke-linecap="butt" stroke-linejoin="round"/><path d="M544,452 L548,500" fill="none" stroke="#2a2c32" stroke-width="5" stroke-linecap="butt" stroke-linejoin="round"/><path d="M566,452 L570,500" fill="none" stroke="#2a2c32" stroke-width="5" stroke-linecap="butt" stroke-linejoin="round"/><path d="M588,452 L592,500" fill="none" stroke="#2a2c32" stroke-width="5" stroke-linecap="butt" stroke-linejoin="round"/><path d="M610,452 L614,500" fill="none" stroke="#2a2c32" stroke-width="5" stroke-linecap="butt" stroke-linejoin="round"/><path d="M632,452 L636,500" fill="none" stroke="#2a2c32" stroke-width="5" stroke-linecap="butt" stroke-linejoin="round"/><path d="M654,452 L658,500" fill="none" stroke="#2a2c32" stroke-width="5" stroke-linecap="butt" stroke-linejoin="round"/><path d="M676,452 L680,500" fill="none" stroke="#2a2c32" stroke-width="5" stroke-linecap="butt" stroke-linejoin="round"/><polygon points="520,24 606,20 606,36 520,40" fill="#cc3834"/><polygon points="-5,330 60,320 140,400 140,452 -5,470" fill="#3e424e"/><polygon points="0,395 130,398 138,450 0,465" fill="#48505f"/><polygon points="120,452 420,440 420,482 120,482" fill="#2c2e34"/><polygon points="130,456 300,450 300,470 130,474" fill="#45474f"/><polygon points="340,430 392,384 424,410 420,472 350,472" fill="#3c3e48"/><path d="M346,430 L392,390" fill="none" stroke="#6a6e7a" stroke-width="6" stroke-linecap="round" stroke-linejoin="round"/></g><defs><linearGradient id="bnG2" x1="0" x2="1" y1="0" y2="0"><stop offset="0" stop-color="#56565c"/><stop offset="0.2" stop-color="#a6a6ac"/><stop offset="0.6" stop-color="#94949a"/><stop offset="0.9" stop-color="#707076"/><stop offset="1" stop-color="#4a4a50"/></linearGradient><linearGradient id="bnT2" x1="0" x2="0" y1="0" y2="1"><stop offset="0" stop-color="#e85048"/><stop offset="0.45" stop-color="#d03430"/><stop offset="0.55" stop-color="#f07068"/><stop offset="1" stop-color="#c02c2a"/></linearGradient></defs><rect x="15.5" y="214.5" width="221.5" height="38" fill="#2e3036"/><rect x="17" y="216" width="218.5" height="35" fill="none" stroke="#7e8088" stroke-width="1.4"/><rect x="21" y="219.5" width="211" height="28" fill="url(#bnG2)"/><rect x="21" y="219.5" width="211" height="28" fill="none" stroke="#1c1c20" stroke-width="1.2"/><rect x="22" y="244" width="209" height="3" fill="#3a3a40" opacity="0.7"/><text x="25.5" y="240" font-family="Liberation Sans,sans-serif" font-weight="bold" font-size="17.6" textLength="201" lengthAdjust="spacingAndGlyphs" fill="url(#bnT2)" stroke="#c83430" stroke-width="0.9">VIPER|SQUADRON</text></svg><text x="158" y="40" text-anchor="middle" font-family="Liberation Sans,sans-serif" font-size="7.2" fill="#fff" textLength="88" lengthAdjust="spacingAndGlyphs">LOGO0 (512X512)</text><text x="158" y="336" text-anchor="middle" font-family="Liberation Sans,sans-serif" font-size="7.2" fill="#fff" textLength="88" lengthAdjust="spacingAndGlyphs">LOGO1 (512X512)</text><rect x="0" y="0" width="1" height="356" fill="#000"/></svg>
<div class="trk" style="left:1012px;top:256px;width:16px;height:356px"></div>
<div class="btn" style="left:1012px;top:256px;width:16px;height:17px"></div>
<div class="btn" style="left:1012px;top:562px;width:16px;height:17px"></div>
<div class="btn" style="left:1012px;top:594px;width:16px;height:18px"></div>
<svg style="left:1012px;top:256px" width="16" height="356"><polygon points="4.5,10.5 11.5,10.5 8,6.5"/><polygon points="4.5,345.0 11.5,345.0 8,349.0"/></svg>
<div class="t u" style="left:697px;top:618px;line-height:14px">Filter :</div>
<div class="sunk" style="left:744px;top:616px;width:285px;height:20px;background:#fff"></div>
<div class="win" style="left:5px;top:346px;width:677px;height:348px"></div>
<div class="a" style="left:8px;top:349px;width:671px;height:21px;background:linear-gradient(90deg,#808080,#c2c2c2)"></div>
<div class="ttl" style="left:10px;top:350px;font-size:16.7px;line-height:20px;color:#d8d4cc">Texture Properties - VIP_Sq_Logos.Logos.Logo1 (512x512)</div>
<div class="btn" style="left:658px;top:351px;width:19px;height:17px"></div>
<svg style="left:658px;top:351px" width="19" height="17" viewBox="0 0 19 17"><path d="M5.5 4.5 L13 12 M13 4.5 L5.5 12" stroke="#000" stroke-width="2.1" fill="none"/></svg>
<div class="grp" style="left:12px;top:381px;width:272px;height:274px"><span>Texture</span></div>
<div class="grp" style="left:295px;top:381px;width:379px;height:274px"><span>Properties</span></div>
<svg style="left:20px;top:392px" width="256" height="256" viewBox="0 0 256 256"><rect width="256" height="256" fill="#000"/><g transform="translate(128,0) scale(0.177778)"></g><g transform="translate(0,0) scale(0.177778)"><polygon points="120,305 148,300 124,692 100,692" fill="#8e4e40"/><path d="M122,310 L103,690" fill="none" stroke="#7a3e30" stroke-width="6" stroke-linecap="butt" stroke-linejoin="round"/><path d="M72,112 L152,230" fill="none" stroke="#4a4f5c" stroke-width="20" stroke-linecap="round" stroke-linejoin="round"/><path d="M76,108 L154,222" fill="none" stroke="#8a90a2" stroke-width="7" stroke-linecap="round" stroke-linejoin="round"/><polygon points="138,242 188,222 204,256 156,278" fill="#2c3038"/><polygon points="150,300 205,240 240,218 256,240 252,272 300,332 332,400 376,470 420,560 470,640 500,655 495,700 470,720 330,720 270,560 215,470 170,380" fill="#4c505c"/><polygon points="150,300 215,268 262,350 300,440 330,482 292,512 245,500 200,430 160,350" fill="#343842"/><path d="M165,305 L220,283" fill="none" stroke="#5a5f6e" stroke-width="4" stroke-linecap="butt" stroke-linejoin="round" opacity="0.7"/><path d="M179,327 L234,305" fill="none" stroke="#5a5f6e" stroke-width="4" stroke-linecap="butt" stroke-linejoin="round" opacity="0.7"/><path d="M193,349 L248,327" fill="none" stroke="#5a5f6e" stroke-width="4" stroke-linecap="butt" stroke-linejoin="round" opacity="0.7"/><path d="M207,371 L262,349" fill="none" stroke="#5a5f6e" stroke-width="4" stroke-linecap="butt" stroke-linejoin="round" opacity="0.7"/><path d="M221,393 L276,371" fill="none" stroke="#5a5f6e" stroke-width="4" stroke-linecap="butt" stroke-linejoin="round" opacity="0.7"/><path d="M235,415 L290,393" fill="none" stroke="#5a5f6e" stroke-width="4" stroke-linecap="butt" stroke-linejoin="round" opacity="0.7"/><path d="M249,437 L304,415" fill="none" stroke="#5a5f6e" stroke-width="4" stroke-linecap="butt" stroke-linejoin="round" opacity="0.7"/><path d="M263,459 L318,437" fill="none" stroke="#5a5f6e" stroke-width="4" stroke-linecap="butt" stroke-linejoin="round" opacity="0.7"/><path d="M277,481 L332,459" fill="none" stroke="#5a5f6e" stroke-width="4" stroke-linecap="butt" stroke-linejoin="round" opacity="0.7"/><path d="M240,224 L252,278 L300,336 L334,402 L378,472" fill="none" stroke="#a8aec0" stroke-width="9" stroke-linecap="round" stroke-linejoin="round"/><path d="M214,262 L262,348 L300,438" fill="none" stroke="#9aa0b2" stroke-width="5" stroke-linecap="round" stroke-linejoin="round"/><polygon points="296,492 348,478 432,640 400,662" fill="#8a90a6"/><polygon points="330,520 360,508 420,625 395,640" fill="#3c404c"/><polygon points="385,615 440,598 502,650 497,706 462,722 410,722" fill="#4e5362"/><path d="M415,640 L440,700 M435,630 L460,692" fill="none" stroke="#22242a" stroke-width="7" stroke-linecap="butt" stroke-linejoin="round"/><path d="M440,600 L500,652 L496,700" fill="none" stroke="#8a90a2" stroke-width="5" stroke-linecap="round" stroke-linejoin="round"/><polygon points="222,520 300,540 335,600 330,680 260,720 170,720 190,640 200,590" fill="#1c1d22"/><polygon points="232,512 262,505 268,545 240,552" fill="#8e94a6"/><polygon points="268,545 320,570 312,596 262,575" fill="#6a6e7c"/><polygon points="200,610 250,600 262,630 210,645" fill="#3a3c46"/><polygon points="185,665 235,650 250,684 198,700" fill="#40424c"/><polygon points="160,690 215,700 200,722 150,722" fill="#6a6e7c"/><polygon points="676,208 722,228 722,332 692,300" fill="#c6cad6"/><ellipse cx="612" cy="625" rx="58" ry="34" fill="#505258" transform="rotate(-35 612 625)"/><ellipse cx="600" cy="640" rx="40" ry="22" fill="#7a7c84" transform="rotate(-35 600 640)" opacity="0.6"/><polygon points="680,600 722,585 722,650 690,655" fill="#45464c"/><path d="M640,548 L722,520" fill="none" stroke="#3a3a40" stroke-width="10" stroke-linecap="round" stroke-linejoin="round"/></g><g transform="translate(128,0) scale(0.177778)"><polygon points="40,365 215,265 255,290 268,400 200,520 100,600 0,560 0,330" fill="#060607"/><path d="M130,335 C160,360 175,390 150,470" fill="none" stroke="#3c3c40" stroke-width="9" stroke-linecap="round" stroke-linejoin="round"/><path d="M40,395 C70,410 90,415 115,412" fill="none" stroke="#343438" stroke-width="8" stroke-linecap="round" stroke-linejoin="round"/><path d="M60,470 C90,500 100,540 90,590" fill="none" stroke="#333337" stroke-width="8" stroke-linecap="round" stroke-linejoin="round"/><path d="M330,520 C420,480 540,500 600,570 C640,620 650,680 650,722 L330,722 Z" fill="#040405"/><path d="M340,510 C420,482 520,498 590,560" fill="none" stroke="#3c3c40" stroke-width="7" stroke-linecap="round" stroke-linejoin="round"/><path d="M600,570 C635,620 648,680 648,722" fill="none" stroke="#48484c" stroke-width="8" stroke-linecap="round" stroke-linejoin="round"/><polygon points="350,434 402,446 442,492 392,486" fill="#60646f"/><polygon points="298,456 346,438 388,476 340,502" fill="#b8bcc8"/><polygon points="250,490 300,464 342,506 292,536" fill="#a4a8b4"/><polygon points="204,530 250,500 292,540 250,578" fill="#868a98"/><polygon points="204,534 250,580 196,660 150,620" fill="#4a4e5a"/><path d="M204,534 L250,580" fill="none" stroke="#8a8e9c" stroke-width="6" stroke-linecap="round" stroke-linejoin="round"/><polygon points="404,374 422,366 522,430 512,452 400,402" fill="#8a8e9c"/><path d="M410,372 L518,436" fill="none" stroke="#c0c4d0" stroke-width="5" stroke-linecap="round" stroke-linejoin="round"/><polygon points="468,444 496,452 486,502 464,496" fill="#5a5e6a"/><polygon points="455,566 522,562 522,582 455,586" fill="#cc3834"/><polygon points="536,560 592,556 592,574 536,578" fill="#cc3834"/><polygon points="468,599 588,595 588,615 468,619" fill="#cc3834"/><polygon points="480,632 542,628 542,647 480,651" fill="#cc3834"/><polygon points="553,628 602,624 602,642 553,646" fill="#cc3834"/><polygon points="490,665 602,661 602,680 490,684" fill="#cc3834"/><polygon points="505,699 557,695 557,714 505,718" fill="#cc3834"/><polygon points="566,696 614,692 614,710 566,714" fill="#cc3834"/><polygon points="245,600 300,560 340,640 305,705 235,690" fill="#4a4a4e"/><polygon points="255,610 295,580 320,640 295,690 250,675" fill="#606066" opacity="0.7"/><polygon points="-10,590 70,585 90,640 20,665 -10,650" fill="#4c4c52"/><path d="M100,600 L170,560" fill="none" stroke="#303034" stroke-width="8" stroke-linecap="round" stroke-linejoin="round"/></g><g transform="translate(112,0) scale(0.133333)"><defs><linearGradient id="hlG3" x1="0" x2="1" y1="0" y2="0"><stop offset="0" stop-color="#9a9a9c"/><stop offset="0.45" stop-color="#6c6c6e"/><stop offset="1" stop-color="#4a4a4c"/></linearGradient><linearGradient id="nkG3" x1="0" x2="1" y1="0" y2="0"><stop offset="0" stop-color="#6e6e72"/><stop offset="1" stop-color="#2a2a2e"/></linearGradient><linearGradient id="glG3" x1="0" x2="0" y1="0" y2="1"><stop offset="0" stop-color="#101828"/><stop offset="1" stop-color="#4a6ea6"/></linearGradient></defs><path d="M118,130 C150,85 210,55 290,52 C345,60 385,120 412,185 L424,222 L396,244 C380,215 352,190 336,150 C300,128 230,122 165,142 Z" fill="url(#hlG3)"/><path d="M190,335 C260,318 340,285 404,250 L398,222 C340,262 270,300 200,318 Z" fill="url(#glG3)"/><path d="M398,366 L444,374 C452,430 440,500 422,562 C410,610 398,650 392,690 L358,690 C366,640 376,600 380,562 C386,500 388,430 398,366 Z" fill="url(#nkG3)"/><path d="M452,440 C480,500 510,550 545,590" fill="none" stroke="#3c3c40" stroke-width="11" stroke-linecap="round" stroke-linejoin="round"/><path d="M268,500 C300,520 320,540 335,575" fill="none" stroke="#38383c" stroke-width="10" stroke-linecap="round" stroke-linejoin="round"/><path d="M330,470 C345,520 340,580 300,640" fill="none" stroke="#2e2e32" stroke-width="10" stroke-linecap="round" stroke-linejoin="round"/><path d="M150,590 C200,570 240,590 250,640" fill="none" stroke="#303034" stroke-width="9" stroke-linecap="round" stroke-linejoin="round"/><path d="M58,284 C90,330 150,350 250,326 C320,305 370,280 408,256 L404,348 C350,395 260,450 172,492 C120,460 80,400 62,330 Z" fill="#c4c8d4"/><path d="M58,284 C90,330 150,350 250,326 C320,305 370,280 408,256 L407,276 C360,300 320,322 250,345 C150,368 95,350 62,312 Z" fill="#eceef4"/><path d="M66,336.1 C100,379.2 150,394.3 250,368.4 C320,344.6 370,314.8 406,288.9" fill="none" stroke="#6e7388" stroke-width="6"/><path d="M74,368.4 C106,409.8 150,423.2 250,395.6 C320,368.4 370,335.2 406,307.6" fill="none" stroke="#6e7388" stroke-width="6"/><path d="M82,400.7 C112,440.4 150,452.1 250,422.8 C320,392.2 370,355.6 406,326.3" fill="none" stroke="#6e7388" stroke-width="6"/><path d="M90,431.1 C118,469.2 150,479.3 250,448.4 C320,414.6 370,374.8 406,343.9" fill="none" stroke="#6e7388" stroke-width="6"/><path d="M58,284 C64,340 90,420 172,492" fill="none" stroke="#8a8ea0" stroke-width="6" stroke-linecap="round" stroke-linejoin="round"/><rect x="398" y="214" width="62" height="148" rx="20" fill="#b4b8c4"/><rect x="424" y="240" width="22" height="98" rx="9" fill="#6a6e7a"/><path d="M408,236 L408,340" fill="none" stroke="#e6e8f0" stroke-width="7" stroke-linecap="round" stroke-linejoin="round"/></g><g transform="translate(64,64) scale(0.177778)"><polygon points="195,272 240,226 300,214 322,240 292,292 222,312" fill="#404046"/><polygon points="205,270 245,232 290,225 300,245 270,285 222,300" fill="#62646c" opacity="0.75"/><polygon points="318,252 372,230 452,256 402,292 340,292" fill="#505056"/><polygon points="588,262 640,218 692,250 702,332 622,302" fill="#56565c"/><polygon points="600,262 640,232 680,255 688,315 628,292" fill="#74747c" opacity="0.6"/><polygon points="505,500 600,492 700,520 690,545 600,560 520,540" fill="#48484e"/><polygon points="470,565 540,560 565,640 520,660 480,620" fill="#424248"/><polygon points="560,640 640,620 700,650 640,668" fill="#3a3a40"/><polygon points="620,440 720,420 720,450 650,470" fill="#3c3c42"/><path d="M215,350 C210,400 225,450 245,480" fill="none" stroke="#3a3a40" stroke-width="6" stroke-linecap="round" stroke-linejoin="round"/><path d="M20,420 C40,470 30,520 10,560" fill="none" stroke="#303036" stroke-width="6" stroke-linecap="round" stroke-linejoin="round"/><polygon points="-5,95 30,150 95,290 136,300 140,332 102,392 80,380 20,250 -5,232" fill="#4c505c"/><polygon points="30,235 70,225 100,300 85,345 60,330" fill="#8a90a4"/><path d="M52,265 L66,320 M66,258 L80,315" fill="none" stroke="#2a2c34" stroke-width="6" stroke-linecap="butt" stroke-linejoin="round"/><path d="M0,110 L28,156 L92,292 L134,302" fill="none" stroke="#9aa0b2" stroke-width="5" stroke-linecap="round" stroke-linejoin="round"/><polygon points="558,242 440,285 312,478 430,596 572,336" fill="#5e5e6c"/><polygon points="558,242 440,285 312,478 345,508 468,310 556,266" fill="#727282"/><polygon points="558,242 572,336 430,596 408,575 548,330" fill="#50505c"/><path d="M558,242 L440,285 L312,478" fill="none" stroke="#a4a4b6" stroke-width="5" stroke-linecap="round" stroke-linejoin="round"/><path d="M558,242 L572,336 L430,596" fill="none" stroke="#8a8a9c" stroke-width="4" stroke-linecap="round" stroke-linejoin="round"/><polygon points="300,474 316,458 446,590 430,606" fill="#9ca0b2"/><polygon points="318,512 405,598 340,722 215,722 240,620" fill="#4a4e5a"/><polygon points="332,556 368,572 356,600 322,586" fill="#b0b4c4"/><polygon points="296,596 334,612 322,640 286,626" fill="#b0b4c4"/><polygon points="270,640 308,656 296,684 260,670" fill="#a8acbc"/><polygon points="228,640 262,650 250,690 220,690" fill="#9ea2b2"/><polygon points="360,610 398,600 350,700 320,700" fill="#6a6e7c"/><path d="M318,500 C268,500 240,545 228,600 C220,645 228,672 246,700" fill="none" stroke="#8a92a6" stroke-width="46" stroke-linecap="butt" stroke-linejoin="round"/><path d="M318,500 C268,500 240,545 228,600 C220,645 228,672 246,700" fill="none" stroke="#3e4656" stroke-width="34" stroke-linecap="butt" stroke-linejoin="round"/></g><g transform="translate(32,80) scale(0.177778)"><polygon points="266,368 302,362 436,444 402,502 350,472 244,420" fill="#5a5e6a"/><polygon points="275,371 293,380 268,431 250,421" fill="#b6bac8"/><polygon points="308,387 326,395 299,447 282,438" fill="#b6bac8"/><polygon points="341,402 359,411 331,464 314,455" fill="#b6bac8"/><polygon points="374,418 392,426 362,481 345,472" fill="#b6bac8"/><polygon points="407,434 426,442 394,498 377,489" fill="#b6bac8"/></g><g transform="translate(0,128) scale(0.177778)"><polygon points="98,240 125,240 128,472 106,472" fill="#6e3e2e"/><polygon points="28,150 150,14 216,70 82,202" fill="#585c6a"/><path d="M30,148 L150,16" fill="none" stroke="#9096a8" stroke-width="9" stroke-linecap="round" stroke-linejoin="round"/><path d="M60,170 L180,40" fill="none" stroke="#3a3e4a" stroke-width="10" stroke-linecap="butt" stroke-linejoin="round"/><polygon points="28,150 82,202 70,208 22,162" fill="#22242a"/><polygon points="160,-5 285,-5 282,42 232,82 190,52" fill="#454956"/><polygon points="250,0 340,0 350,40 300,70 262,50" fill="#2a2c34"/><polygon points="330,30 380,50 360,80 322,66" fill="#4a4c58"/><polygon points="245,86 330,40 386,110 402,172 470,262 482,330 452,396 392,402 322,322 262,202 240,142" fill="#24262c"/><polygon points="248,150 276,138 332,300 312,322" fill="#8c90a0"/><polygon points="262,86 330,48 380,108 300,128" fill="#7a7e8c"/><polygon points="290,128 384,112 390,140 300,160" fill="#1e2026"/><polygon points="306,172 396,132 404,172 322,204" fill="#a0a4b4"/><polygon points="330,240 402,250 470,332 442,392 382,332" fill="#6a6e7c"/><path d="M336,246 L400,256 L466,334" fill="none" stroke="#b0b4c4" stroke-width="6" stroke-linecap="round" stroke-linejoin="round"/><polygon points="340,300 380,340 400,390 360,370" fill="#2a2c34"/><polygon points="420,180 470,250 490,330 470,330 400,200" fill="#2c2e36"/><polygon points="545,342 602,320 662,372 632,452 562,472 535,422" fill="#5c5e6c"/><polygon points="555,350 600,332 650,375 600,380" fill="#8a8e9e"/><polygon points="540,400 560,470 632,452 640,420 580,440" fill="#3a3c46"/><polygon points="640,430 722,410 722,480 650,480" fill="#3a3e4a"/></g><g transform="translate(128,128) scale(0.177778)"><polygon points="145,140 240,130 332,150 300,192 160,186" fill="#4c4c52"/><polygon points="160,145 240,138 310,155 290,180 170,178" fill="#6a6a72" opacity="0.55"/><polygon points="110,200 172,222 186,300 140,282" fill="#46464c"/><polygon points="215,256 292,250 252,292 226,296" fill="#3a3a40"/><polygon points="255,332 372,290 382,322 300,362" fill="#404046"/><polygon points="200,330 250,300 240,360 195,385" fill="#38383e"/><path d="M400,30 C440,90 450,170 470,250 C480,300 500,320 520,332" fill="none" stroke="#48484e" stroke-width="8" stroke-linecap="round" stroke-linejoin="round"/><path d="M330,60 C380,40 420,50 440,60" fill="none" stroke="#3c3c42" stroke-width="7" stroke-linecap="round" stroke-linejoin="round"/><path d="M330,230 C360,260 350,300 320,340" fill="none" stroke="#3a3a40" stroke-width="6" stroke-linecap="round" stroke-linejoin="round"/><polygon points="480,100 562,110 572,252 522,332 482,242" fill="#2e2e32"/><ellipse cx="530" cy="190" rx="32" ry="88" fill="#66666c" transform="rotate(-8 530 190)"/><polygon points="590,130 642,80 672,200 652,302 612,332" fill="#242428"/><ellipse cx="630" cy="170" rx="14" ry="75" fill="#5c5c62" transform="rotate(-6 630 170)"/><ellipse cx="655" cy="250" rx="8" ry="50" fill="#3c3c42" transform="rotate(-6 655 250)"/><polygon points="600,340 652,330 692,482 642,472" fill="#2c2c30"/><ellipse cx="630" cy="400" rx="13" ry="52" fill="#6a6a70" transform="rotate(-10 630 400)"/><ellipse cx="665" cy="420" rx="8" ry="45" fill="#404046" transform="rotate(-10 665 420)"/><polygon points="482,472 560,442 640,450 692,490 692,522 490,502" fill="#4e5058"/><path d="M500,452 L504,500" fill="none" stroke="#2a2c32" stroke-width="5" stroke-linecap="butt" stroke-linejoin="round"/><path d="M522,452 L526,500" fill="none" stroke="#2a2c32" stroke-width="5" stroke-linecap="butt" stroke-linejoin="round"/><path d="M544,452 L548,500" fill="none" stroke="#2a2c32" stroke-width="5" stroke-linecap="butt" stroke-linejoin="round"/><path d="M566,452 L570,500" fill="none" stroke="#2a2c32" stroke-width="5" stroke-linecap="butt" stroke-linejoin="round"/><path d="M588,452 L592,500" fill="none" stroke="#2a2c32" stroke-width="5" stroke-linecap="butt" stroke-linejoin="round"/><path d="M610,452 L614,500" fill="none" stroke="#2a2c32" stroke-width="5" stroke-linecap="butt" stroke-linejoin="round"/><path d="M632,452 L636,500" fill="none" stroke="#2a2c32" stroke-width="5" stroke-linecap="butt" stroke-linejoin="round"/><path d="M654,452 L658,500" fill="none" stroke="#2a2c32" stroke-width="5" stroke-linecap="butt" stroke-linejoin="round"/><path d="M676,452 L680,500" fill="none" stroke="#2a2c32" stroke-width="5" stroke-linecap="butt" stroke-linejoin="round"/><polygon points="520,24 606,20 606,36 520,40" fill="#cc3834"/><polygon points="-5,330 60,320 140,400 140,452 -5,470" fill="#3e424e"/><polygon points="0,395 130,398 138,450 0,465" fill="#48505f"/><polygon points="120,452 420,440 420,482 120,482" fill="#2c2e34"/><polygon points="130,456 300,450 300,470 130,474" fill="#45474f"/><polygon points="340,430 392,384 424,410 420,472 350,472" fill="#3c3e48"/><path d="M346,430 L392,390" fill="none" stroke="#6a6e7a" stroke-width="6" stroke-linecap="round" stroke-linejoin="round"/></g><defs><linearGradient id="bnG3" x1="0" x2="1" y1="0" y2="0"><stop offset="0" stop-color="#56565c"/><stop offset="0.2" stop-color="#a6a6ac"/><stop offset="0.6" stop-color="#94949a"/><stop offset="0.9" stop-color="#707076"/><stop offset="1" stop-color="#4a4a50"/></linearGradient><linearGradient id="bnT3" x1="0" x2="0" y1="0" y2="1"><stop offset="0" stop-color="#e85048"/><stop offset="0.45" stop-color="#d03430"/><stop offset="0.55" stop-color="#f07068"/><stop offset="1" stop-color="#c02c2a"/></linearGradient></defs><rect x="15.5" y="214.5" width="221.5" height="38" fill="#2e3036"/><rect x="17" y="216" width="218.5" height="35" fill="none" stroke="#7e8088" stroke-width="1.4"/><rect x="21" y="219.5" width="211" height="28" fill="url(#bnG3)"/><rect x="21" y="219.5" width="211" height="28" fill="none" stroke="#1c1c20" stroke-width="1.2"/><rect x="22" y="244" width="209" height="3" fill="#3a3a40" opacity="0.7"/><text x="25.5" y="240" font-family="Liberation Sans,sans-serif" font-weight="bold" font-size="17.6" textLength="201" lengthAdjust="spacingAndGlyphs" fill="url(#bnT3)" stroke="#c83430" stroke-width="0.9">VIPER|SQUADRON</text></svg>
<div class="sunk" style="left:303px;top:392px;width:363px;height:256px"></div>
<div class="a" style="left:305px;top:394px;width:343px;height:252px;overflow:hidden;background:#dedee7"><div class="row" style="top:0px;background:#dedee7;"><span style="left:20px;color:#000">Actions</span></div><div class="row" style="top:16px;background:#dedee7;"><span style="left:20px;color:#000">Animation</span></div><div class="row" style="top:32px;background:#dedee7;"><span style="left:20px;color:#000">Object</span></div><div class="row" style="top:48px;background:#dedee7;"><span style="left:20px;color:#000">Quality</span></div><div class="row" style="top:64px;background:#00007c;border-top-color:#00007c;"><span style="left:20px;color:#fff">Surface</span></div><div class="row" style="top:80px;background:#dedee7"><span style="left:32px">bAutoUPan</span><span style="left:132px">False</span></div><div class="row" style="top:96px;background:#dedee7"><span style="left:32px">bAutoVPan</span><span style="left:132px">False</span></div><div class="row" style="top:112px;background:#dedee7"><span style="left:32px">bBigWavy</span><span style="left:132px">False</span></div><div class="row" style="top:128px;background:#dedee7"><span style="left:32px">bCloudWavy</span><span style="left:132px">False</span></div><div class="row" style="top:144px;background:#dedee7"><span style="left:32px">bEnvironment</span><span style="left:132px">False</span></div><div class="row" style="top:160px;background:#dedee7"><span style="left:32px">bFakeBackdrop</span><span style="left:132px">False</span></div><div class="row" style="top:176px;background:#dedee7"><span style="left:32px">bMasked</span><span style="left:132px">True</span></div><div class="row" style="top:192px;background:#dedee7"><span style="left:32px">bModulate</span><span style="left:132px">False</span></div><div class="row" style="top:208px;background:#dedee7"><span style="left:32px">bNoSmooth</span><span style="left:132px">False</span></div><div class="row" style="top:224px;background:#dedee7"><span style="left:32px">bSmallWavy</span><span style="left:132px">False</span></div><div class="row" style="top:240px;background:#dedee7"><span style="left:32px">bTransparent</span><span style="left:132px">False</span></div><svg style="left:0;top:0" width="343" height="252"><path d="M8.5 13 V76 M8.5 76 V252" stroke="#000" stroke-width="1" stroke-dasharray="1 1" fill="none"/><path d="M20.5 80 V252" stroke="#000" stroke-width="1" stroke-dasharray="1 1" fill="none"/><path d="M13 8.5 H19" stroke="#000" stroke-width="1" stroke-dasharray="1 1" fill="none"/><rect x="4.5" y="4.5" width="8" height="8" fill="#fff" stroke="#808080"/><path d="M6 8.5 H11" stroke="#000" stroke-width="1"/><path d="M8.5 6.0 V11.0" stroke="#000" stroke-width="1"/><path d="M13 24.5 H19" stroke="#000" stroke-width="1" stroke-dasharray="1 1" fill="none"/><rect x="4.5" y="20.5" width="8" height="8" fill="#fff" stroke="#808080"/><path d="M6 24.5 H11" stroke="#000" stroke-width="1"/><path d="M8.5 22.0 V27.0" stroke="#000" stroke-width="1"/><path d="M13 40.5 H19" stroke="#000" stroke-width="1" stroke-dasharray="1 1" fill="none"/><rect x="4.5" y="36.5" width="8" height="8" fill="#fff" stroke="#808080"/><path d="M6 40.5 H11" stroke="#000" stroke-width="1"/><path d="M8.5 38.0 V43.0" stroke="#000" stroke-width="1"/><path d="M13 56.5 H19" stroke="#000" stroke-width="1" stroke-dasharray="1 1" fill="none"/><rect x="4.5" y="52.5" width="8" height="8" fill="#fff" stroke="#808080"/><path d="M6 56.5 H11" stroke="#000" stroke-width="1"/><path d="M8.5 54.0 V59.0" stroke="#000" stroke-width="1"/><path d="M13 72.5 H19" stroke="#000" stroke-width="1" stroke-dasharray="1 1" fill="none"/><rect x="4.5" y="68.5" width="8" height="8" fill="#e8e8f0" stroke="#808080"/><path d="M6 72.5 H11" stroke="#000" stroke-width="1"/><path d="M21 88.5 H31" stroke="#000" stroke-width="1" stroke-dasharray="1 1" fill="none"/><path d="M21 104.5 H31" stroke="#000" stroke-width="1" stroke-dasharray="1 1" fill="none"/><path d="M21 120.5 H31" stroke="#000" stroke-width="1" stroke-dasharray="1 1" fill="none"/><path d="M21 136.5 H31" stroke="#000" stroke-width="1" stroke-dasharray="1 1" fill="none"/><path d="M21 152.5 H31" stroke="#000" stroke-width="1" stroke-dasharray="1 1" fill="none"/><path d="M21 168.5 H31" stroke="#000" stroke-width="1" stroke-dasharray="1 1" fill="none"/><path d="M21 184.5 H31" stroke="#000" stroke-width="1" stroke-dasharray="1 1" fill="none"/><path d="M21 200.5 H31" stroke="#000" stroke-width="1" stroke-dasharray="1 1" fill="none"/><path d="M21 216.5 H31" stroke="#000" stroke-width="1" stroke-dasharray="1 1" fill="none"/><path d="M21 232.5 H31" stroke="#000" stroke-width="1" stroke-dasharray="1 1" fill="none"/><path d="M21 248.5 H31" stroke="#000" stroke-width="1" stroke-dasharray="1 1" fill="none"/><rect x="127" y="80" width="1" height="172" fill="#fff"/></svg></div>
<div class="trk" style="left:648px;top:394px;width:16px;height:252px"></div>
<div class="btn" style="left:648px;top:394px;width:16px;height:17px"></div>
<div class="btn" style="left:648px;top:411px;width:16px;height:163px"></div>
<div class="btn" style="left:648px;top:629px;width:16px;height:17px"></div>
<svg style="left:648px;top:394px" width="16" height="252"><polygon points="4.5,10.5 11.5,10.5 8,6.5"/><polygon points="4.5,241.5 11.5,241.5 8,245.5"/></svg>
<div class="btn" style="left:11px;top:664px;width:77px;height:22px"></div>
<div class="t uc" style="left:11px;top:664px;width:77px;height:22px;line-height:22px;text-align:center">Clear</div>
<div class="win" style="left:3px;top:4px;width:677px;height:348px"></div>
<div class="a" style="left:6px;top:7px;width:671px;height:21px;background:linear-gradient(90deg,#808080,#c2c2c2)"></div>
<div class="ttl" style="left:8px;top:8px;font-size:16.7px;line-height:20px;color:#d8d4cc">Texture Properties - VIP_Sq_Logos.Logos.Logo0 (512x512)</div>
<div class="btn" style="left:656px;top:9px;width:19px;height:17px"></div>
<svg style="left:656px;top:9px" width="19" height="17" viewBox="0 0 19 17"><path d="M5.5 4.5 L13 12 M13 4.5 L5.5 12" stroke="#000" stroke-width="2.1" fill="none"/></svg>
<div class="grp" style="left:10px;top:39px;width:272px;height:274px"><span>Texture</span></div>
<div class="grp" style="left:293px;top:39px;width:379px;height:274px"><span>Properties</span></div>
<svg style="left:18px;top:50px" width="256" height="256" viewBox="0 0 256 256"><rect width="256" height="256" fill="#000"/><g transform="translate(128,0) scale(0.177778)"></g><g transform="translate(0,0) scale(0.177778)"><polygon points="120,305 148,300 124,692 100,692" fill="#8e4e40"/><path d="M122,310 L103,690" fill="none" stroke="#7a3e30" stroke-width="6" stroke-linecap="butt" stroke-linejoin="round"/><path d="M72,112 L152,230" fill="none" stroke="#4a4f5c" stroke-width="20" stroke-linecap="round" stroke-linejoin="round"/><path d="M76,108 L154,222" fill="none" stroke="#8a90a2" stroke-width="7" stroke-linecap="round" stroke-linejoin="round"/><polygon points="138,242 188,222 204,256 156,278" fill="#2c3038"/><polygon points="150,300 205,240 240,218 256,240 252,272 300,332 332,400 376,470 420,560 470,640 500,655 495,700 470,720 330,720 270,560 215,470 170,380" fill="#4c505c"/><polygon points="150,300 215,268 262,350 300,440 330,482 292,512 245,500 200,430 160,350" fill="#343842"/><path d="M165,305 L220,283" fill="none" stroke="#5a5f6e" stroke-width="4" stroke-linecap="butt" stroke-linejoin="round" opacity="0.7"/><path d="M179,327 L234,305" fill="none" stroke="#5a5f6e" stroke-width="4" stroke-linecap="butt" stroke-linejoin="round" opacity="0.7"/><path d="M193,349 L248,327" fill="none" stroke="#5a5f6e" stroke-width="4" stroke-linecap="butt" stroke-linejoin="round" opacity="0.7"/><path d="M207,371 L262,349" fill="none" stroke="#5a5f6e" stroke-width="4" stroke-linecap="butt" stroke-linejoin="round" opacity="0.7"/><path d="M221,393 L276,371" fill="none" stroke="#5a5f6e" stroke-width="4" stroke-linecap="butt" stroke-linejoin="round" opacity="0.7"/><path d="M235,415 L290,393" fill="none" stroke="#5a5f6e" stroke-width="4" stroke-linecap="butt" stroke-linejoin="round" opacity="0.7"/><path d="M249,437 L304,415" fill="none" stroke="#5a5f6e" stroke-width="4" stroke-linecap="butt" stroke-linejoin="round" opacity="0.7"/><path d="M263,459 L318,437" fill="none" stroke="#5a5f6e" stroke-width="4" stroke-linecap="butt" stroke-linejoin="round" opacity="0.7"/><path d="M277,481 L332,459" fill="none" stroke="#5a5f6e" stroke-width="4" stroke-linecap="butt" stroke-linejoin="round" opacity="0.7"/><path d="M240,224 L252,278 L300,336 L334,402 L378,472" fill="none" stroke="#a8aec0" stroke-width="9" stroke-linecap="round" stroke-linejoin="round"/><path d="M214,262 L262,348 L300,438" fill="none" stroke="#9aa0b2" stroke-width="5" stroke-linecap="round" stroke-linejoin="round"/><polygon points="296,492 348,478 432,640 400,662" fill="#8a90a6"/><polygon points="330,520 360,508 420,625 395,640" fill="#3c404c"/><polygon points="385,615 440,598 502,650 497,706 462,722 410,722" fill="#4e5362"/><path d="M415,640 L440,700 M435,630 L460,692" fill="none" stroke="#22242a" stroke-width="7" stroke-linecap="butt" stroke-linejoin="round"/><path d="M440,600 L500,652 L496,700" fill="none" stroke="#8a90a2" stroke-width="5" stroke-linecap="round" stroke-linejoin="round"/><polygon points="222,520 300,540 335,600 330,680 260,720 170,720 190,640 200,590" fill="#1c1d22"/><polygon points="232,512 262,505 268,545 240,552" fill="#8e94a6"/><polygon points="268,545 320,570 312,596 262,575" fill="#6a6e7c"/><polygon points="200,610 250,600 262,630 210,645" fill="#3a3c46"/><polygon points="185,665 235,650 250,684 198,700" fill="#40424c"/><polygon points="160,690 215,700 200,722 150,722" fill="#6a6e7c"/><polygon points="676,208 722,228 722,332 692,300" fill="#c6cad6"/><ellipse cx="612" cy="625" rx="58" ry="34" fill="#505258" transform="rotate(-35 612 625)"/><ellipse cx="600" cy="640" rx="40" ry="22" fill="#7a7c84" transform="rotate(-35 600 640)" opacity="0.6"/><polygon points="680,600 722,585 722,650 690,655" fill="#45464c"/><path d="M640,548 L722,520" fill="none" stroke="#3a3a40" stroke-width="10" stroke-linecap="round" stroke-linejoin="round"/></g><g transform="translate(128,0) scale(0.177778)"><polygon points="40,365 215,265 255,290 268,400 200,520 100,600 0,560 0,330" fill="#060607"/><path d="M130,335 C160,360 175,390 150,470" fill="none" stroke="#3c3c40" stroke-width="9" stroke-linecap="round" stroke-linejoin="round"/><path d="M40,395 C70,410 90,415 115,412" fill="none" stroke="#343438" stroke-width="8" stroke-linecap="round" stroke-linejoin="round"/><path d="M60,470 C90,500 100,540 90,590" fill="none" stroke="#333337" stroke-width="8" stroke-linecap="round" stroke-linejoin="round"/><path d="M330,520 C420,480 540,500 600,570 C640,620 650,680 650,722 L330,722 Z" fill="#040405"/><path d="M340,510 C420,482 520,498 590,560" fill="none" stroke="#3c3c40" stroke-width="7" stroke-linecap="round" stroke-linejoin="round"/><path d="M600,570 C635,620 648,680 648,722" fill="none" stroke="#48484c" stroke-width="8" stroke-linecap="round" stroke-linejoin="round"/><polygon points="350,434 402,446 442,492 392,486" fill="#60646f"/><polygon points="298,456 346,438 388,476 340,502" fill="#b8bcc8"/><polygon points="250,490 300,464 342,506 292,536" fill="#a4a8b4"/><polygon points="204,530 250,500 292,540 250,578" fill="#868a98"/><polygon points="204,534 250,580 196,660 150,620" fill="#4a4e5a"/><path d="M204,534 L250,580" fill="none" stroke="#8a8e9c" stroke-width="6" stroke-linecap="round" stroke-linejoin="round"/><polygon points="404,374 422,366 522,430 512,452 400,402" fill="#8a8e9c"/><path d="M410,372 L518,436" fill="none" stroke="#c0c4d0" stroke-width="5" stroke-linecap="round" stroke-linejoin="round"/><polygon points="468,444 496,452 486,502 464,496" fill="#5a5e6a"/><polygon points="455,566 522,562 522,582 455,586" fill="#cc3834"/><polygon points="536,560 592,556 592,574 536,578" fill="#cc3834"/><polygon points="468,599 588,595 588,615 468,619" fill="#cc3834"/><polygon points="480,632 542,628 542,647 480,651" fill="#cc3834"/><polygon points="553,628 602,624 602,642 553,646" fill="#cc3834"/><polygon points="490,665 602,661 602,680 490,684" fill="#cc3834"/><polygon points="505,699 557,695 557,714 505,718" fill="#cc3834"/><polygon points="566,696 614,692 614,710 566,714" fill="#cc3834"/><polygon points="245,600 300,560 340,640 305,705 235,690" fill="#4a4a4e"/><polygon points="255,610 295,580 320,640 295,690 250,675" fill="#606066" opacity="0.7"/><polygon points="-10,590 70,585 90,640 20,665 -10,650" fill="#4c4c52"/><path d="M100,600 L170,560" fill="none" stroke="#303034" stroke-width="8" stroke-linecap="round" stroke-linejoin="round"/></g><g transform="translate(112,0) scale(0.133333)"><defs><linearGradient id="hlG4" x1="0" x2="1" y1="0" y2="0"><stop offset="0" stop-color="#9a9a9c"/><stop offset="0.45" stop-color="#6c6c6e"/><stop offset="1" stop-color="#4a4a4c"/></linearGradient><linearGradient id="nkG4" x1="0" x2="1" y1="0" y2="0"><stop offset="0" stop-color="#6e6e72"/><stop offset="1" stop-color="#2a2a2e"/></linearGradient><linearGradient id="glG4" x1="0" x2="0" y1="0" y2="1"><stop offset="0" stop-color="#101828"/><stop offset="1" stop-color="#4a6ea6"/></linearGradient></defs><path d="M118,130 C150,85 210,55 290,52 C345,60 385,120 412,185 L424,222 L396,244 C380,215 352,190 336,150 C300,128 230,122 165,142 Z" fill="url(#hlG4)"/><path d="M190,335 C260,318 340,285 404,250 L398,222 C340,262 270,300 200,318 Z" fill="url(#glG4)"/><path d="M398,366 L444,374 C452,430 440,500 422,562 C410,610 398,650 392,690 L358,690 C366,640 376,600 380,562 C386,500 388,430 398,366 Z" fill="url(#nkG4)"/><path d="M452,440 C480,500 510,550 545,590" fill="none" stroke="#3c3c40" stroke-width="11" stroke-linecap="round" stroke-linejoin="round"/><path d="M268,500 C300,520 320,540 335,575" fill="none" stroke="#38383c" stroke-width="10" stroke-linecap="round" stroke-linejoin="round"/><path d="M330,470 C345,520 340,580 300,640" fill="none" stroke="#2e2e32" stroke-width="10" stroke-linecap="round" stroke-linejoin="round"/><path d="M150,590 C200,570 240,590 250,640" fill="none" stroke="#303034" stroke-width="9" stroke-linecap="round" stroke-linejoin="round"/><path d="M58,284 C90,330 150,350 250,326 C320,305 370,280 408,256 L404,348 C350,395 260,450 172,492 C120,460 80,400 62,330 Z" fill="#c4c8d4"/><path d="M58,284 C90,330 150,350 250,326 C320,305 370,280 408,256 L407,276 C360,300 320,322 250,345 C150,368 95,350 62,312 Z" fill="#eceef4"/><path d="M66,336.1 C100,379.2 150,394.3 250,368.4 C320,344.6 370,314.8 406,288.9" fill="none" stroke="#6e7388" stroke-width="6"/><path d="M74,368.4 C106,409.8 150,423.2 250,395.6 C320,368.4 370,335.2 406,307.6" fill="none" stroke="#6e7388" stroke-width="6"/><path d="M82,400.7 C112,440.4 150,452.1 250,422.8 C320,392.2 370,355.6 406,326.3" fill="none" stroke="#6e7388" stroke-width="6"/><path d="M90,431.1 C118,469.2 150,479.3 250,448.4 C320,414.6 370,374.8 406,343.9" fill="none" stroke="#6e7388" stroke-width="6"/><path d="M58,284 C64,340 90,420 172,492" fill="none" stroke="#8a8ea0" stroke-width="6" stroke-linecap="round" stroke-linejoin="round"/><rect x="398" y="214" width="62" height="148" rx="20" fill="#b4b8c4"/><rect x="424" y="240" width="22" height="98" rx="9" fill="#6a6e7a"/><path d="M408,236 L408,340" fill="none" stroke="#e6e8f0" stroke-width="7" stroke-linecap="round" stroke-linejoin="round"/></g><g transform="translate(64,64) scale(0.177778)"><polygon points="195,272 240,226 300,214 322,240 292,292 222,312" fill="#404046"/><polygon points="205,270 245,232 290,225 300,245 270,285 222,300" fill="#62646c" opacity="0.75"/><polygon points="318,252 372,230 452,256 402,292 340,292" fill="#505056"/><polygon points="588,262 640,218 692,250 702,332 622,302" fill="#56565c"/><polygon points="600,262 640,232 680,255 688,315 628,292" fill="#74747c" opacity="0.6"/><polygon points="505,500 600,492 700,520 690,545 600,560 520,540" fill="#48484e"/><polygon points="470,565 540,560 565,640 520,660 480,620" fill="#424248"/><polygon points="560,640 640,620 700,650 640,668" fill="#3a3a40"/><polygon points="620,440 720,420 720,450 650,470" fill="#3c3c42"/><path d="M215,350 C210,400 225,450 245,480" fill="none" stroke="#3a3a40" stroke-width="6" stroke-linecap="round" stroke-linejoin="round"/><path d="M20,420 C40,470 30,520 10,560" fill="none" stroke="#303036" stroke-width="6" stroke-linecap="round" stroke-linejoin="round"/><polygon points="-5,95 30,150 95,290 136,300 140,332 102,392 80,380 20,250 -5,232" fill="#4c505c"/><polygon points="30,235 70,225 100,300 85,345 60,330" fill="#8a90a4"/><path d="M52,265 L66,320 M66,258 L80,315" fill="none" stroke="#2a2c34" stroke-width="6" stroke-linecap="butt" stroke-linejoin="round"/><path d="M0,110 L28,156 L92,292 L134,302" fill="none" stroke="#9aa0b2" stroke-width="5" stroke-linecap="round" stroke-linejoin="round"/><polygon points="558,242 440,285 312,478 430,596 572,336" fill="#5e5e6c"/><polygon points="558,242 440,285 312,478 345,508 468,310 556,266" fill="#727282"/><polygon points="558,242 572,336 430,596 408,575 548,330" fill="#50505c"/><path d="M558,242 L440,285 L312,478" fill="none" stroke="#a4a4b6" stroke-width="5" stroke-linecap="round" stroke-linejoin="round"/><path d="M558,242 L572,336 L430,596" fill="none" stroke="#8a8a9c" stroke-width="4" stroke-linecap="round" stroke-linejoin="round"/><polygon points="300,474 316,458 446,590 430,606" fill="#9ca0b2"/><polygon points="318,512 405,598 340,722 215,722 240,620" fill="#4a4e5a"/><polygon points="332,556 368,572 356,600 322,586" fill="#b0b4c4"/><polygon points="296,596 334,612 322,640 286,626" fill="#b0b4c4"/><polygon points="270,640 308,656 296,684 260,670" fill="#a8acbc"/><polygon points="228,640 262,650 250,690 220,690" fill="#9ea2b2"/><polygon points="360,610 398,600 350,700 320,700" fill="#6a6e7c"/><path d="M318,500 C268,500 240,545 228,600 C220,645 228,672 246,700" fill="none" stroke="#8a92a6" stroke-width="46" stroke-linecap="butt" stroke-linejoin="round"/><path d="M318,500 C268,500 240,545 228,600 C220,645 228,672 246,700" fill="none" stroke="#3e4656" stroke-width="34" stroke-linecap="butt" stroke-linejoin="round"/></g><g transform="translate(32,80) scale(0.177778)"><polygon points="266,368 302,362 436,444 402,502 350,472 244,420" fill="#5a5e6a"/><polygon points="275,371 293,380 268,431 250,421" fill="#b6bac8"/><polygon points="308,387 326,395 299,447 282,438" fill="#b6bac8"/><polygon points="341,402 359,411 331,464 314,455" fill="#b6bac8"/><polygon points="374,418 392,426 362,481 345,472" fill="#b6bac8"/><polygon points="407,434 426,442 394,498 377,489" fill="#b6bac8"/></g><g transform="translate(0,128) scale(0.177778)"><polygon points="98,240 125,240 128,472 106,472" fill="#6e3e2e"/><polygon points="28,150 150,14 216,70 82,202" fill="#585c6a"/><path d="M30,148 L150,16" fill="none" stroke="#9096a8" stroke-width="9" stroke-linecap="round" stroke-linejoin="round"/><path d="M60,170 L180,40" fill="none" stroke="#3a3e4a" stroke-width="10" stroke-linecap="butt" stroke-linejoin="round"/><polygon points="28,150 82,202 70,208 22,162" fill="#22242a"/><polygon points="160,-5 285,-5 282,42 232,82 190,52" fill="#454956"/><polygon points="250,0 340,0 350,40 300,70 262,50" fill="#2a2c34"/><polygon points="330,30 380,50 360,80 322,66" fill="#4a4c58"/><polygon points="245,86 330,40 386,110 402,172 470,262 482,330 452,396 392,402 322,322 262,202 240,142" fill="#24262c"/><polygon points="248,150 276,138 332,300 312,322" fill="#8c90a0"/><polygon points="262,86 330,48 380,108 300,128" fill="#7a7e8c"/><polygon points="290,128 384,112 390,140 300,160" fill="#1e2026"/><polygon points="306,172 396,132 404,172 322,204" fill="#a0a4b4"/><polygon points="330,240 402,250 470,332 442,392 382,332" fill="#6a6e7c"/><path d="M336,246 L400,256 L466,334" fill="none" stroke="#b0b4c4" stroke-width="6" stroke-linecap="round" stroke-linejoin="round"/><polygon points="340,300 380,340 400,390 360,370" fill="#2a2c34"/><polygon points="420,180 470,250 490,330 470,330 400,200" fill="#2c2e36"/><polygon points="545,342 602,320 662,372 632,452 562,472 535,422" fill="#5c5e6c"/><polygon points="555,350 600,332 650,375 600,380" fill="#8a8e9e"/><polygon points="540,400 560,470 632,452 640,420 580,440" fill="#3a3c46"/><polygon points="640,430 722,410 722,480 650,480" fill="#3a3e4a"/></g><g transform="translate(128,128) scale(0.177778)"><polygon points="145,140 240,130 332,150 300,192 160,186" fill="#4c4c52"/><polygon points="160,145 240,138 310,155 290,180 170,178" fill="#6a6a72" opacity="0.55"/><polygon points="110,200 172,222 186,300 140,282" fill="#46464c"/><polygon points="215,256 292,250 252,292 226,296" fill="#3a3a40"/><polygon points="255,332 372,290 382,322 300,362" fill="#404046"/><polygon points="200,330 250,300 240,360 195,385" fill="#38383e"/><path d="M400,30 C440,90 450,170 470,250 C480,300 500,320 520,332" fill="none" stroke="#48484e" stroke-width="8" stroke-linecap="round" stroke-linejoin="round"/><path d="M330,60 C380,40 420,50 440,60" fill="none" stroke="#3c3c42" stroke-width="7" stroke-linecap="round" stroke-linejoin="round"/><path d="M330,230 C360,260 350,300 320,340" fill="none" stroke="#3a3a40" stroke-width="6" stroke-linecap="round" stroke-linejoin="round"/><polygon points="480,100 562,110 572,252 522,332 482,242" fill="#2e2e32"/><ellipse cx="530" cy="190" rx="32" ry="88" fill="#66666c" transform="rotate(-8 530 190)"/><polygon points="590,130 642,80 672,200 652,302 612,332" fill="#242428"/><ellipse cx="630" cy="170" rx="14" ry="75" fill="#5c5c62" transform="rotate(-6 630 170)"/><ellipse cx="655" cy="250" rx="8" ry="50" fill="#3c3c42" transform="rotate(-6 655 250)"/><polygon points="600,340 652,330 692,482 642,472" fill="#2c2c30"/><ellipse cx="630" cy="400" rx="13" ry="52" fill="#6a6a70" transform="rotate(-10 630 400)"/><ellipse cx="665" cy="420" rx="8" ry="45" fill="#404046" transform="rotate(-10 665 420)"/><polygon points="482,472 560,442 640,450 692,490 692,522 490,502" fill="#4e5058"/><path d="M500,452 L504,500" fill="none" stroke="#2a2c32" stroke-width="5" stroke-linecap="butt" stroke-linejoin="round"/><path d="M522,452 L526,500" fill="none" stroke="#2a2c32" stroke-width="5" stroke-linecap="butt" stroke-linejoin="round"/><path d="M544,452 L548,500" fill="none" stroke="#2a2c32" stroke-width="5" stroke-linecap="butt" stroke-linejoin="round"/><path d="M566,452 L570,500" fill="none" stroke="#2a2c32" stroke-width="5" stroke-linecap="butt" stroke-linejoin="round"/><path d="M588,452 L592,500" fill="none" stroke="#2a2c32" stroke-width="5" stroke-linecap="butt" stroke-linejoin="round"/><path d="M610,452 L614,500" fill="none" stroke="#2a2c32" stroke-width="5" stroke-linecap="butt" stroke-linejoin="round"/><path d="M632,452 L636,500" fill="none" stroke="#2a2c32" stroke-width="5" stroke-linecap="butt" stroke-linejoin="round"/><path d="M654,452 L658,500" fill="none" stroke="#2a2c32" stroke-width="5" stroke-linecap="butt" stroke-linejoin="round"/><path d="M676,452 L680,500" fill="none" stroke="#2a2c32" stroke-width="5" stroke-linecap="butt" stroke-linejoin="round"/><polygon points="520,24 606,20 606,36 520,40" fill="#cc3834"/><polygon points="-5,330 60,320 140,400 140,452 -5,470" fill="#3e424e"/><polygon points="0,395 130,398 138,450 0,465" fill="#48505f"/><polygon points="120,452 420,440 420,482 120,482" fill="#2c2e34"/><polygon points="130,456 300,450 300,470 130,474" fill="#45474f"/><polygon points="340,430 392,384 424,410 420,472 350,472" fill="#3c3e48"/><path d="M346,430 L392,390" fill="none" stroke="#6a6e7a" stroke-width="6" stroke-linecap="round" stroke-linejoin="round"/></g><defs><linearGradient id="bnG4" x1="0" x2="1" y1="0" y2="0"><stop offset="0" stop-color="#56565c"/><stop offset="0.2" stop-color="#a6a6ac"/><stop offset="0.6" stop-color="#94949a"/><stop offset="0.9" stop-color="#707076"/><stop offset="1" stop-color="#4a4a50"/></linearGradient><linearGradient id="bnT4" x1="0" x2="0" y1="0" y2="1"><stop offset="0" stop-color="#e85048"/><stop offset="0.45" stop-color="#d03430"/><stop offset="0.55" stop-color="#f07068"/><stop offset="1" stop-color="#c02c2a"/></linearGradient></defs><rect x="15.5" y="214.5" width="221.5" height="38" fill="#2e3036"/><rect x="17" y="216" width="218.5" height="35" fill="none" stroke="#7e8088" stroke-width="1.4"/><rect x="21" y="219.5" width="211" height="28" fill="url(#bnG4)"/><rect x="21" y="219.5" width="211" height="28" fill="none" stroke="#1c1c20" stroke-width="1.2"/><rect x="22" y="244" width="209" height="3" fill="#3a3a40" opacity="0.7"/><text x="25.5" y="240" font-family="Liberation Sans,sans-serif" font-weight="bold" font-size="17.6" textLength="201" lengthAdjust="spacingAndGlyphs" fill="url(#bnT4)" stroke="#c83430" stroke-width="0.9">VIPER|SQUADRON</text></svg>
<div class="sunk" style="left:301px;top:50px;width:363px;height:256px"></div>
<div class="a" style="left:303px;top:52px;width:343px;height:252px;overflow:hidden;background:#dedee7"><div class="row" style="top:0px;background:#dedee7;"><span style="left:20px;color:#000">Actions</span></div><div class="row" style="top:16px;background:#dedee7;"><span style="left:20px;color:#000">Animation</span></div><div class="row" style="top:32px;background:#dedee7;"><span style="left:20px;color:#000">Object</span></div><div class="row" style="top:48px;background:#dedee7;"><span style="left:20px;color:#000">Quality</span></div><div class="row" style="top:64px;background:#00007c;border-top-color:#00007c;"><span style="left:20px;color:#fff">Surface</span></div><div class="row" style="top:80px;background:#dedee7"><span style="left:32px">bAutoUPan</span><span style="left:132px">False</span></div><div class="row" style="top:96px;background:#dedee7"><span style="left:32px">bAutoVPan</span><span style="left:132px">False</span></div><div class="row" style="top:112px;background:#dedee7"><span style="left:32px">bBigWavy</span><span style="left:132px">False</span></div><div class="row" style="top:128px;background:#dedee7"><span style="left:32px">bCloudWavy</span><span style="left:132px">False</span></div><div class="row" style="top:144px;background:#dedee7"><span style="left:32px">bEnvironment</span><span style="left:132px">False</span></div><div class="row" style="top:160px;background:#dedee7"><span style="left:32px">bFakeBackdrop</span><span style="left:132px">False</span></div><div class="row" style="top:176px;background:#dedee7"><span style="left:32px">bMasked</span><span style="left:132px">True</span></div><div class="row" style="top:192px;background:#dedee7"><span style="left:32px">bModulate</span><span style="left:132px">False</span></div><div class="row" style="top:208px;background:#dedee7"><span style="left:32px">bNoSmooth</span><span style="left:132px">False</span></div><div class="row" style="top:224px;background:#dedee7"><span style="left:32px">bSmallWavy</span><span style="left:132px">False</span></div><div class="row" style="top:240px;background:#dedee7"><span style="left:32px">bTransparent</span><span style="left:132px">False</span></div><svg style="left:0;top:0" width="343" height="252"><path d="M8.5 13 V76 M8.5 76 V252" stroke="#000" stroke-width="1" stroke-dasharray="1 1" fill="none"/><path d="M20.5 80 V252" stroke="#000" stroke-width="1" stroke-dasharray="1 1" fill="none"/><path d="M13 8.5 H19" stroke="#000" stroke-width="1" stroke-dasharray="1 1" fill="none"/><rect x="4.5" y="4.5" width="8" height="8" fill="#fff" stroke="#808080"/><path d="M6 8.5 H11" stroke="#000" stroke-width="1"/><path d="M8.5 6.0 V11.0" stroke="#000" stroke-width="1"/><path d="M13 24.5 H19" stroke="#000" stroke-width="1" stroke-dasharray="1 1" fill="none"/><rect x="4.5" y="20.5" width="8" height="8" fill="#fff" stroke="#808080"/><path d="M6 24.5 H11" stroke="#000" stroke-width="1"/><path d="M8.5 22.0 V27.0" stroke="#000" stroke-width="1"/><path d="M13 40.5 H19" stroke="#000" stroke-width="1" stroke-dasharray="1 1" fill="none"/><rect x="4.5" y="36.5" width="8" height="8" fill="#fff" stroke="#808080"/><path d="M6 40.5 H11" stroke="#000" stroke-width="1"/><path d="M8.5 38.0 V43.0" stroke="#000" stroke-width="1"/><path d="M13 56.5 H19" stroke="#000" stroke-width="1" stroke-dasharray="1 1" fill="none"/><rect x="4.5" y="52.5" width="8" height="8" fill="#fff" stroke="#808080"/><path d="M6 56.5 H11" stroke="#000" stroke-width="1"/><path d="M8.5 54.0 V59.0" stroke="#000" stroke-width="1"/><path d="M13 72.5 H19" stroke="#000" stroke-width="1" stroke-dasharray="1 1" fill="none"/><rect x="4.5" y="68.5" width="8" height="8" fill="#e8e8f0" stroke="#808080"/><path d="M6 72.5 H11" stroke="#000" stroke-width="1"/><path d="M21 88.5 H31" stroke="#000" stroke-width="1" stroke-dasharray="1 1" fill="none"/><path d="M21 104.5 H31" stroke="#000" stroke-width="1" stroke-dasharray="1 1" fill="none"/><path d="M21 120.5 H31" stroke="#000" stroke-width="1" stroke-dasharray="1 1" fill="none"/><path d="M21 136.5 H31" stroke="#000" stroke-width="1" stroke-dasharray="1 1" fill="none"/><path d="M21 152.5 H31" stroke="#000" stroke-width="1" stroke-dasharray="1 1" fill="none"/><path d="M21 168.5 H31" stroke="#000" stroke-width="1" stroke-dasharray="1 1" fill="none"/><path d="M21 184.5 H31" stroke="#000" stroke-width="1" stroke-dasharray="1 1" fill="none"/><path d="M21 200.5 H31" stroke="#000" stroke-width="1" stroke-dasharray="1 1" fill="none"/><path d="M21 216.5 H31" stroke="#000" stroke-width="1" stroke-dasharray="1 1" fill="none"/><path d="M21 232.5 H31" stroke="#000" stroke-width="1" stroke-dasharray="1 1" fill="none"/><path d="M21 248.5 H31" stroke="#000" stroke-width="1" stroke-dasharray="1 1" fill="none"/><rect x="127" y="80" width="1" height="172" fill="#fff"/></svg></div>
<div class="trk" style="left:646px;top:52px;width:16px;height:252px"></div>
<div class="btn" style="left:646px;top:52px;width:16px;height:17px"></div>
<div class="btn" style="left:646px;top:69px;width:16px;height:163px"></div>
<div class="btn" style="left:646px;top:287px;width:16px;height:17px"></div>
<svg style="left:646px;top:52px" width="16" height="252"><polygon points="4.5,10.5 11.5,10.5 8,6.5"/><polygon points="4.5,241.5 11.5,241.5 8,245.5"/></svg>
<div class="btn" style="left:9px;top:322px;width:77px;height:22px"></div>
<div class="t uc" style="left:9px;top:322px;width:77px;height:22px;line-height:22px;text-align:center">Clear</div>
<svg style="left:0;top:693px" width="90" height="27" viewBox="0 0 90 27"><rect x="0" y="0" width="68" height="25" fill="#838383"/><path d="M5 3.5 H13 M5 6.5 H13 M5 9.5 H13" stroke="#000" stroke-width="1.6"/><path d="M33.5 0 V14" stroke="#6a6a6a"/><path d="M0 14.5 H66" stroke="#a0a0a0"/><path d="M0 15.5 H66" stroke="#707070"/><polygon points="38,0 63,0 61,11" fill="#7fd8d0" stroke="#406060" stroke-width="1"/><circle cx="50" cy="3" r="1" fill="#300"/><rect x="0" y="17" width="48" height="8" fill="#9a9a9a"/><rect x="50" y="16" width="16" height="9" fill="#b0b0b0" stroke="#505050"/><polygon points="54,20 62,20 58,24" fill="#222"/></svg>
<div class="t" style="left:77.5px;top:697px;font-size:14px;font-weight:bold;letter-spacing:0.3px;height:16px;line-height:16px">Command</div>
<div class="trk" style="left:68px;top:693px;width:18px;height:25px"></div>
<div class="btn" style="left:69px;top:703px;width:17px;height:16px"></div>
<svg style="left:69px;top:703px" width="17" height="16"><polygon points="5.0,6.0 12.0,6.0 8.5,10.0"/></svg>
<div class="sunk" style="left:157px;top:697px;width:382px;height:20px;background:#fff"></div>
<div class="btn" style="left:521px;top:699px;width:16px;height:16px"></div>
<svg style="left:521px;top:699px" width="16" height="16"><polygon points="4.5,6.0 11.5,6.0 8,10.0"/></svg>
<svg style="left:547px;top:697px" width="19" height="19"><rect x="0.5" y="0.5" width="18" height="18" fill="#fff" stroke="#000"/><rect x="1" y="1" width="17" height="3" fill="#0a246a"/><path d="M4 7.5 H15 M4 10.5 H15 M4 13.5 H15 M4 16 H15" stroke="#40a0a0" stroke-width="1.2" stroke-dasharray="2 1"/></svg>
<svg style="left:584px;top:697px" width="19" height="19"><path d="M9.5 0.5 V18.5 M0.5 9.5 H18.5" stroke="#000" stroke-width="1.4"/><rect x="5" y="5" width="9" height="9" fill="#7fd0c8" stroke="#000"/></svg>
<svg style="left:624px;top:698px" width="16" height="16"><rect x="1" y="1" width="14" height="14" fill="#7fd0c8"/><path d="M1 1.5 H15 M1 5 H15 M1 8.5 H15 M1 12 H15 M1 15 H15 M1.5 1 V15 M5 1 V15 M8.5 1 V15 M12 1 V15 M15 1 V15" stroke="#305050" stroke-width="1"/></svg>
<div class="sunk" style="left:646px;top:697px;width:63px;height:20px;background:#fff"></div>
<div class="t" style="left:651px;top:700px;font-size:12px;line-height:14px">8</div>
<div class="btn" style="left:691px;top:699px;width:16px;height:16px"></div>
<svg style="left:691px;top:699px" width="16" height="16"><polygon points="4.5,6.0 11.5,6.0 8,10.0"/></svg>
<svg style="left:727px;top:696px" width="20" height="20"><circle cx="10" cy="10" r="8.5" fill="#7fd0c8" stroke="#000" stroke-width="1.6"/><circle cx="10" cy="10" r="4" fill="none" stroke="#000" stroke-width="1.2"/><path d="M10 1 V19 M1 10 H19 M3.6 3.6 L16.4 16.4 M16.4 3.6 L3.6 16.4" stroke="#000" stroke-width="1"/></svg>
<svg style="left:756px;top:697px" width="16" height="16"><rect x="6.5" y="6.5" width="8" height="8" fill="#838383" stroke="#fff"/><rect x="0.5" y="0.5" width="10" height="10" fill="#303030" stroke="#e0e0e0"/><path d="M3 3 L8 8 M3 3 H6.5 M3 3 V6.5" stroke="#c0c0c0" stroke-width="1.2"/></svg>
</body></html>
